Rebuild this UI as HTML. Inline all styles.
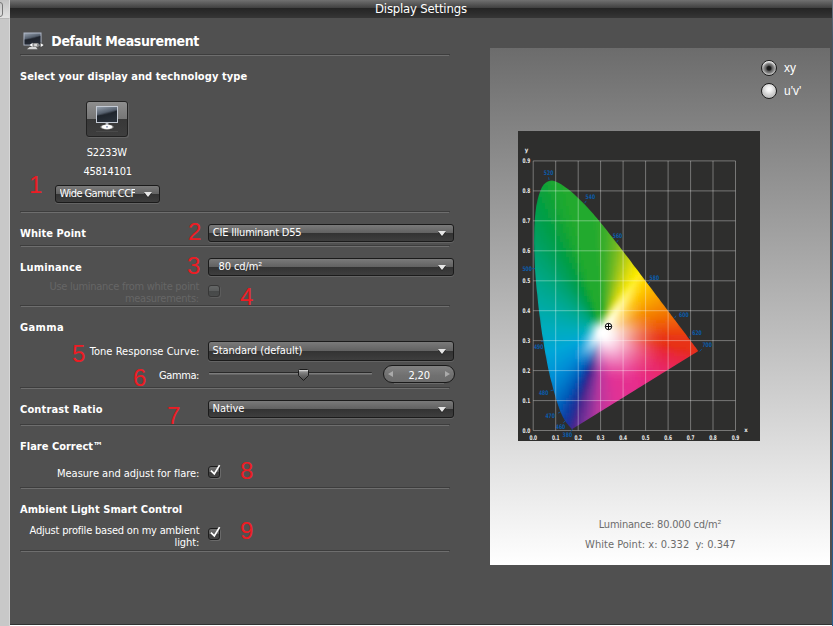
<!DOCTYPE html>
<html><head><meta charset="utf-8"><title>Display Settings</title>
<style>
*{box-sizing:border-box;margin:0;padding:0}
html,body{width:833px;height:626px;overflow:hidden;background:#505050}
body{position:relative;font-family:"DejaVu Sans Condensed","DejaVu Sans","Liberation Sans",sans-serif;font-size:11px;color:#fff}
.a{position:absolute;white-space:nowrap}
.t{position:absolute;white-space:nowrap;line-height:16px}
.b{font-weight:bold}
.sep{position:absolute;left:20px;width:430px;height:1px;background:#3d3d3d}
.sep:after{content:"";position:absolute;left:1px;right:1px;top:1px;height:1px;background:#6e6e6e}
.dd{position:absolute;left:208px;width:246px;height:18px;border:1px solid #1b1b1b;border-radius:3px;background:linear-gradient(#7a7a7a 0,#626262 48%,#333 52%,#3e3e3e 100%);box-shadow:0 1px 0 #646464}
.dd i{position:absolute;right:7px;top:6px;width:0;height:0;border-left:4.5px solid transparent;border-right:4.5px solid transparent;border-top:5px solid #e6e6e6;filter:drop-shadow(0 1px 0 #222)}
.num{position:absolute;color:#ed1c24;font-family:"Liberation Sans",sans-serif;font-size:24px;line-height:24px;white-space:nowrap}
.cb{position:absolute;left:208px;width:12px;height:12px;border:1px solid #1e1e1e;border-radius:3px;background:linear-gradient(#727272,#5c5c5c 50%,#3c3c3c 51%,#444);box-shadow:1px 1px 0 #6a6a6a}
.g{color:#666}
</style></head>
<body>
<div class="a" style="left:10px;top:0;width:823px;height:18px;background:linear-gradient(#717171 0,#6a6a6a 1px,#3f3f3f 8px,#252525 8.5px,#2c2c2c 13px,#363636 18px)"></div>
<div class="a" style="left:0;top:0;width:10px;height:626px;background:#c8c8c8;border-right:1px solid #d6d6d6"></div>
<div class="a" style="left:0;top:0;width:10px;height:19px;background:linear-gradient(#c2c2c2,#e2e2e2);border-bottom:1px solid #b8b8b8;border-right:1px solid #dcdcdc"></div>
<div class="a" style="left:-8px;top:2px;width:11px;height:15px;border:1px solid #777;border-radius:3px"></div>
<div class="a" style="left:832px;top:0;width:1px;height:626px;background:linear-gradient(#6a7480 0,#46566a 40px,#2e5680 60%,#2b5d8c)"></div>
<div class="a" style="left:10px;top:625px;width:822px;height:1px;background:#fff"></div>
<div class="a" style="left:10px;top:624px;width:822px;height:1px;background:#333"></div>
<div class="t " id="t1" style="left:375.00px;top:0px;letter-spacing:-0.188px;font-size:13px;line-height:17px">Display Settings</div>
<div class="t b" id="t2" style="left:51.30px;top:31px;letter-spacing:-0.339px;font-size:14px;line-height:20px">Default Measurement</div>
<svg class="a" style="left:21px;top:30px" width="26" height="22" viewBox="0 0 26 22"><defs><linearGradient id="mss" x1="0" y1="0" x2="0.35" y2="1"><stop offset="0" stop-color="#9aa5b2"/><stop offset=".45" stop-color="#56606e"/><stop offset=".56" stop-color="#2a303a"/><stop offset="1" stop-color="#3a424e"/></linearGradient><radialGradient id="msb" cx=".5" cy=".5" r=".5"><stop offset="0" stop-color="#fff"/><stop offset=".6" stop-color="#f4f4f4"/><stop offset="1" stop-color="#fff" stop-opacity="0"/></radialGradient></defs><rect x="3" y="3" width="17" height="12" fill="url(#mss)" stroke="#aeb6c6"/><path d="M3.5 9.5Q12 9.5 19.5 6V14.5H3.500z" fill="#0c0f16" opacity=".4"/><path d="M6 19.200L8.600 17H15L16.600 19.200z" fill="#e4e4e4" opacity=".9"/><path d="M8.700 15L11.600 12.800V17.200z" fill="#fff"/><rect x="11.800" y="13" width="6" height="4" rx="1.200" fill="#8e8e8e"/><rect x="13.200" y="13.900" width="2.800" height="2.200" fill="#d8d8d8"/><path d="M19.300 12.500L23.300 15.100L19.300 17.700z" fill="#fff" stroke="#262626" stroke-width=".6"/></svg>
<div class="sep" style="top:54px"></div>
<div class="t b" id="t3" style="left:20.00px;top:69px;letter-spacing:0.075px;">Select your display and technology type</div>
<div class="a" style="left:86px;top:101px;width:42px;height:36px;border:1px solid #222;border-radius:3px;background:linear-gradient(#8e8e8e 0,#767676 49%,#383838 51%,#3e3e3e 100%);box-shadow:1px 1px 0 #626262"></div>
<svg class="a" style="left:94px;top:104px" width="26" height="30" viewBox="0 0 26 30"><defs><linearGradient id="mbs" x1="0" y1="0" x2="0.35" y2="1"><stop offset="0" stop-color="#9aa5b2"/><stop offset=".45" stop-color="#56606e"/><stop offset=".56" stop-color="#2a303a"/><stop offset="1" stop-color="#3a424e"/></linearGradient><radialGradient id="mbb" cx=".5" cy=".5" r=".5"><stop offset="0" stop-color="#fff"/><stop offset=".6" stop-color="#f4f4f4"/><stop offset="1" stop-color="#fff" stop-opacity="0"/></radialGradient></defs><rect x="2.5" y="2.5" width="21" height="16" fill="url(#mbs)" stroke="#c4cad4"/><path d="M3 11.5Q13 11.5 23 6.5V18H3z" fill="#10131a" opacity=".4"/><rect x="11.6" y="19" width="2.8" height="3.4" fill="#b8bcc4"/><ellipse cx="13" cy="23" rx="7.2" ry="2.9" fill="url(#mbb)"/><ellipse cx="13" cy="22.8" rx="5" ry="1.7" fill="#fff"/><rect x="12.2" y="22" width="1.6" height="1.6" fill="#8a94b4"/><rect x="2" y="27" width="22" height="1" fill="#5a5a5a" opacity=".45"/></svg>
<div class="t " id="t4" style="left:86.70px;top:145px;letter-spacing:-0.158px;">S2233W</div>
<div class="t " id="t5" style="left:83.40px;top:164px;letter-spacing:-0.245px;">45814101</div>
<div class="num" style="left:29px;top:173px">1</div>
<div class="dd" style="left:55px;top:185px;width:105px"><i></i></div>
<div class="a" style="left:59.5px;top:186px;width:75.6px;height:16px;overflow:hidden"><div class="t" id="wg" style="left:0;top:0;letter-spacing:-0.56px">Wide Gamut CCFL</div></div>
<div class="sep" style="top:211px"></div>
<div class="t b" id="t6" style="left:20.00px;top:226px;letter-spacing:0.048px;">White Point</div>
<div class="num" style="left:188px;top:220px">2</div>
<div class="dd" style="top:224px"><i></i></div>
<div class="t " id="t7" style="left:212.80px;top:225px;letter-spacing:-0.198px;">CIE Illuminant D55</div>
<div class="sep" style="top:245px"></div>
<div class="t b" id="t8" style="left:20.00px;top:260px;letter-spacing:0.177px;">Luminance</div>
<div class="num" style="left:187px;top:254px">3</div>
<div class="dd" style="top:258px"><i></i></div>
<div class="t " id="t9" style="left:218.60px;top:259px;letter-spacing:-0.113px;">80 cd/m²</div>
<div class="t g" id="t10" style="right:633.77px;top:279px;letter-spacing:-0.272px;">Use luminance from white point</div>
<div class="t g" id="t11" style="right:634.07px;top:291px;letter-spacing:-0.270px;">measurements:</div>
<div class="a" style="left:208px;top:285px;width:12px;height:12px;background:linear-gradient(#646666,#5a5c5c 50%,#474949 51%,#4a4c4c);border:1px solid #383838;border-radius:3px;box-shadow:1px 1px 0 #5c5c5c"></div>
<div class="num" style="left:240px;top:285px">4</div>
<div class="sep" style="top:305px"></div>
<div class="t b" id="t12" style="left:20.00px;top:320px;letter-spacing:0.378px;">Gamma</div>
<div class="num" style="left:72px;top:342px">5</div>
<div class="t " id="t13" style="right:633.56px;top:344px;letter-spacing:0.040px;">Tone Response Curve:</div>
<div class="dd" style="top:341px;height:20px"><i style="top:7px"></i></div>
<div class="t " id="t14" style="left:212.40px;top:343px;letter-spacing:-0.039px;">Standard (default)</div>
<div class="num" style="left:133px;top:366px">6</div>
<div class="t " id="t15" style="right:634.02px;top:368px;letter-spacing:-0.420px;">Gamma:</div>
<div class="a" style="left:209px;top:372px;width:163px;height:3px;border-radius:1px;background:linear-gradient(#2a2a2a 0,#2a2a2a 1px,#7c7c7c 1px,#7c7c7c 2px,#666 2px)"></div>
<svg class="a" style="left:298px;top:369px" width="11" height="13" viewBox="0 0 11 13"><defs><linearGradient id="tg" x1="0" y1="0" x2="0" y2="1"><stop offset="0.08" stop-color="#d4d4d4"/><stop offset=".22" stop-color="#8a8a8a"/><stop offset=".55" stop-color="#666"/><stop offset="1" stop-color="#484848"/></linearGradient></defs><path d="M1.5 .5h8a1 1 0 0 1 1 1v5l-5 5-5-5v-5a1 1 0 0 1 1-1z" fill="url(#tg)" stroke="#1c1c1c"/></svg>
<div class="a" style="left:383px;top:365px;width:72px;height:18px;border:1.5px solid #1a1a1a;border-radius:9px;background:linear-gradient(#828282,#707070 60%,#6c6c6c)"></div><div class="a" style="left:394px;top:383px;width:50px;height:1px;background:#6a6a6a"></div>
<div class="t " id="t16" style="left:408.40px;top:368px;letter-spacing:-0.108px;">2,20</div>
<div class="a" style="left:388px;top:371px;width:0;height:0;border-top:3.5px solid transparent;border-bottom:3.5px solid transparent;border-right:5px solid #aaa"></div>
<div class="a" style="left:445px;top:371px;width:0;height:0;border-top:3.5px solid transparent;border-bottom:3.5px solid transparent;border-left:5px solid #aaa"></div>
<div class="sep" style="top:387px"></div>
<div class="t b" id="t17" style="left:20.00px;top:402px;letter-spacing:0.144px;">Contrast Ratio</div>
<div class="num" style="left:167px;top:404px">7</div>
<div class="dd" style="top:400px"><i></i></div>
<div class="t " id="t18" style="left:212.60px;top:401px;letter-spacing:-0.058px;">Native</div>
<div class="sep" style="top:424px"></div>
<div class="t b" id="t19" style="left:20.00px;top:439px;letter-spacing:0.007px;">Flare Correct™</div>
<div class="t " id="t20" style="right:633.61px;top:466px;letter-spacing:-0.014px;">Measure and adjust for flare:</div>
<div class="cb" style="top:466px"><svg style="position:absolute;left:-1px;top:-1px;overflow:visible" width="12" height="12" viewBox="0 0 12 12"><path d="M2.900 4.700L6.300 7.900L11.600 -0.900" fill="none" stroke="#fff" stroke-width="1.700"/></svg></div>
<div class="num" style="left:240px;top:459px">8</div>
<div class="sep" style="top:487px"></div>
<div class="t b" id="t21" style="left:20.00px;top:502px;letter-spacing:0.064px;">Ambient Light Smart Control</div>
<div class="t " id="t22" style="right:633.70px;top:523px;letter-spacing:-0.199px;">Adjust profile based on my ambient</div>
<div class="t " id="t23" style="right:633.66px;top:535px;letter-spacing:-0.064px;">light:</div>
<div class="cb" style="top:528px"><svg style="position:absolute;left:-1px;top:-1px;overflow:visible" width="12" height="12" viewBox="0 0 12 12"><path d="M2.900 4.700L6.300 7.900L11.600 -0.900" fill="none" stroke="#fff" stroke-width="1.700"/></svg></div>
<div class="num" style="left:240px;top:519px">9</div>
<div class="sep" style="top:550px"></div>
<div class="a" style="left:490px;top:48px;width:340px;height:517px;background:linear-gradient(#6c6c6c,#fff)"></div>
<div class="a" style="left:761px;top:60px;width:16px;height:16px;border-radius:50%;border:1px solid #1c1c1c;background:radial-gradient(circle 7px at 50% 52%,#151515 0,#1c1c1c 1.8px,#606060 3.2px,#7c7c7c 4.5px,rgba(150,150,150,.5) 5.8px,rgba(160,160,160,0) 7px),linear-gradient(#fff,#d8d8d8 30%,#a0a0a0 55%,#dcdcdc)"></div>
<div class="t" style="left:784px;top:60px;font-family:'Liberation Sans',sans-serif;font-size:12px">xy</div>
<div class="a" style="left:761px;top:83px;width:16px;height:16px;border-radius:50%;border:1px solid #1c1c1c;background:radial-gradient(circle 10px at 50% 36%,#fff 0,#f2f2f2 2.5px,#cfcfcf 6px,#b4b4b4 10px)"></div>
<div class="t" style="left:784px;top:83px;font-family:'Liberation Sans',sans-serif;font-size:12px">u'v'</div>
<svg class="a" style="left:518px;top:131px" width="242" height="310" viewBox="0 0 242 310">
<style>.c rect{width:3.2px;height:3.2px}.ax{font:bold 6.5px "DejaVu Sans Condensed","DejaVu Sans",sans-serif;fill:#ececec}.wl{font:bold 6.3px "DejaVu Sans Condensed","DejaVu Sans",sans-serif;fill:#0b5ba8}</style>
<defs><clipPath id="lc"><path d="M54.3 298.0L54.3 298.0L54.3 298.0L54.2 298.1L54.2 298.1L54.1 298.1L54.0 298.1L53.9 298.0L53.7 298.0L53.6 297.9L53.5 297.8L53.3 297.6L53.2 297.4L53.0 297.2L52.7 296.9L52.5 296.6L52.2 296.2L51.8 295.8L51.3 295.2L50.8 294.7L50.4 294.2L50.1 293.8L49.8 293.5L49.5 293.1L49.1 292.7L48.8 292.2L48.4 291.8L48.0 291.2L47.6 290.6L47.1 290.0L46.7 289.3L46.2 288.5L45.7 287.5L45.1 286.4L44.5 285.2L43.8 283.8L43.1 282.2L42.4 280.4L41.6 278.4L40.7 276.1L39.8 273.5L38.9 270.6L37.9 267.4L36.8 263.8L35.7 259.8L34.5 255.3L33.3 250.5L31.9 245.2L30.6 239.4L29.3 233.0L28.0 226.2L26.7 218.9L25.4 211.1L24.1 202.9L22.8 194.1L21.6 185.0L20.5 175.9L19.5 166.6L18.5 157.0L17.7 147.5L17.0 138.2L16.6 129.2L16.2 120.3L16.0 111.6L16.1 103.4L16.3 95.6L16.8 88.1L17.5 81.1L18.3 74.8L19.4 69.2L20.8 64.2L22.3 59.9L23.9 56.3L25.7 53.6L27.7 51.7L29.8 50.5L31.9 49.8L34.1 49.6L36.3 50.1L38.6 51.0L40.9 52.1L43.2 53.3L45.4 54.8L47.7 56.4L50.0 58.1L52.2 59.8L54.3 61.6L56.5 63.5L58.6 65.4L60.7 67.4L62.7 69.4L64.8 71.5L66.8 73.6L68.9 75.8L70.9 78.0L72.9 80.3L75.0 82.6L77.0 84.9L79.0 87.3L81.0 89.7L83.0 92.2L85.0 94.6L87.0 97.1L89.0 99.6L91.0 102.2L93.0 104.7L95.1 107.3L97.1 109.9L99.1 112.5L101.1 115.1L103.1 117.7L105.1 120.3L107.1 122.9L109.1 125.5L111.1 128.1L113.1 130.8L115.0 133.4L117.0 136.0L119.0 138.6L120.9 141.1L122.8 143.7L124.8 146.2L126.7 148.8L128.5 151.3L130.4 153.8L132.3 156.2L134.1 158.6L135.9 161.0L137.7 163.4L139.4 165.7L141.2 168.0L142.8 170.3L144.5 172.5L146.1 174.6L147.7 176.7L149.2 178.8L150.7 180.7L152.2 182.6L153.5 184.5L154.9 186.2L156.1 187.9L157.4 189.6L158.6 191.2L159.8 192.8L160.9 194.3L161.9 195.6L162.8 196.8L163.8 198.0L164.9 199.5L166.2 201.3L167.8 203.3L169.3 205.4L170.6 207.2L171.7 208.6L172.7 209.9L173.5 211.0L174.3 212.0L175.1 213.0L175.7 213.9L176.3 214.7L176.8 215.4L177.3 216.0L177.7 216.5L178.1 217.0L178.4 217.4L178.7 217.8L178.9 218.1L179.1 218.4L179.3 218.6L179.5 218.9L179.7 219.2L179.9 219.4L180.1 219.7L180.2 219.8L180.3 219.9L180.3 220.0L180.4 220.0Z"/></clipPath><filter id="bl" x="-5%" y="-5%" width="110%" height="110%"><feGaussianBlur stdDeviation="1.6"/></filter></defs>
<rect width="242" height="310" fill="#2e2e2d"/>
<g clip-path="url(#lc)"><g class="c" filter="url(#bl)">
<rect x="27" y="48" fill="#13a435"/>
<rect x="30" y="48" fill="#17a633"/>
<rect x="33" y="48" fill="#1ba831"/>
<rect x="36" y="48" fill="#1da830"/>
<rect x="39" y="48" fill="#1ea92f"/>
<rect x="24" y="51" fill="#0fa238"/>
<rect x="27" y="51" fill="#12a436"/>
<rect x="30" y="51" fill="#16a534"/>
<rect x="33" y="51" fill="#1aa731"/>
<rect x="36" y="51" fill="#1da830"/>
<rect x="39" y="51" fill="#1ea92f"/>
<rect x="42" y="51" fill="#1fa92f"/>
<rect x="21" y="54" fill="#0ba13c"/>
<rect x="24" y="54" fill="#0ea238"/>
<rect x="27" y="54" fill="#11a336"/>
<rect x="30" y="54" fill="#14a534"/>
<rect x="33" y="54" fill="#18a632"/>
<rect x="36" y="54" fill="#1ca830"/>
<rect x="39" y="54" fill="#1ea92f"/>
<rect x="42" y="54" fill="#1fa92f"/>
<rect x="45" y="54" fill="#21aa2e"/>
<rect x="48" y="54" fill="#22aa2e"/>
<rect x="21" y="57" fill="#09a13d"/>
<rect x="24" y="57" fill="#0ca23a"/>
<rect x="27" y="57" fill="#0fa337"/>
<rect x="30" y="57" fill="#13a435"/>
<rect x="33" y="57" fill="#17a633"/>
<rect x="36" y="57" fill="#1ba831"/>
<rect x="39" y="57" fill="#1da830"/>
<rect x="42" y="57" fill="#1fa92f"/>
<rect x="45" y="57" fill="#20a92f"/>
<rect x="48" y="57" fill="#22aa2e"/>
<rect x="51" y="57" fill="#22aa2e"/>
<rect x="18" y="60" fill="#06a041"/>
<rect x="21" y="60" fill="#08a03f"/>
<rect x="24" y="60" fill="#0ba13b"/>
<rect x="27" y="60" fill="#0ea238"/>
<rect x="30" y="60" fill="#12a436"/>
<rect x="33" y="60" fill="#15a534"/>
<rect x="36" y="60" fill="#19a731"/>
<rect x="39" y="60" fill="#1da830"/>
<rect x="42" y="60" fill="#1ea92f"/>
<rect x="45" y="60" fill="#20a92f"/>
<rect x="48" y="60" fill="#21aa2e"/>
<rect x="51" y="60" fill="#22aa2e"/>
<rect x="54" y="60" fill="#22aa2e"/>
<rect x="18" y="63" fill="#059f43"/>
<rect x="21" y="63" fill="#07a040"/>
<rect x="24" y="63" fill="#0aa13d"/>
<rect x="27" y="63" fill="#0da239"/>
<rect x="30" y="63" fill="#10a337"/>
<rect x="33" y="63" fill="#14a535"/>
<rect x="36" y="63" fill="#18a632"/>
<rect x="39" y="63" fill="#1ca830"/>
<rect x="42" y="63" fill="#1ea92f"/>
<rect x="45" y="63" fill="#1fa92f"/>
<rect x="48" y="63" fill="#21aa2e"/>
<rect x="51" y="63" fill="#22aa2e"/>
<rect x="54" y="63" fill="#22aa2e"/>
<rect x="57" y="63" fill="#23aa2e"/>
<rect x="18" y="66" fill="#049f44"/>
<rect x="21" y="66" fill="#06a041"/>
<rect x="24" y="66" fill="#09a03e"/>
<rect x="27" y="66" fill="#0ca13b"/>
<rect x="30" y="66" fill="#0fa238"/>
<rect x="33" y="66" fill="#12a435"/>
<rect x="36" y="66" fill="#17a633"/>
<rect x="39" y="66" fill="#1ba831"/>
<rect x="42" y="66" fill="#1da830"/>
<rect x="45" y="66" fill="#1fa92f"/>
<rect x="48" y="66" fill="#20a92f"/>
<rect x="51" y="66" fill="#22aa2e"/>
<rect x="54" y="66" fill="#22aa2e"/>
<rect x="57" y="66" fill="#23aa2e"/>
<rect x="60" y="66" fill="#23aa2e"/>
<rect x="18" y="69" fill="#029f45"/>
<rect x="21" y="69" fill="#059f42"/>
<rect x="24" y="69" fill="#07a040"/>
<rect x="27" y="69" fill="#0aa13c"/>
<rect x="30" y="69" fill="#0da239"/>
<rect x="33" y="69" fill="#11a336"/>
<rect x="36" y="69" fill="#15a534"/>
<rect x="39" y="69" fill="#19a731"/>
<rect x="42" y="69" fill="#1da830"/>
<rect x="45" y="69" fill="#1ea92f"/>
<rect x="48" y="69" fill="#20a92f"/>
<rect x="51" y="69" fill="#22aa2e"/>
<rect x="54" y="69" fill="#22aa2e"/>
<rect x="57" y="69" fill="#23aa2e"/>
<rect x="60" y="69" fill="#23aa2e"/>
<rect x="63" y="69" fill="#23aa2e"/>
<rect x="15" y="72" fill="#009e4a"/>
<rect x="18" y="72" fill="#019e46"/>
<rect x="21" y="72" fill="#049f44"/>
<rect x="24" y="72" fill="#06a041"/>
<rect x="27" y="72" fill="#09a13e"/>
<rect x="30" y="72" fill="#0ca13a"/>
<rect x="33" y="72" fill="#10a337"/>
<rect x="36" y="72" fill="#14a435"/>
<rect x="39" y="72" fill="#18a632"/>
<rect x="42" y="72" fill="#1ca830"/>
<rect x="45" y="72" fill="#1ea92f"/>
<rect x="48" y="72" fill="#20a92f"/>
<rect x="51" y="72" fill="#21aa2e"/>
<rect x="54" y="72" fill="#22aa2e"/>
<rect x="57" y="72" fill="#22aa2e"/>
<rect x="60" y="72" fill="#23aa2e"/>
<rect x="63" y="72" fill="#23aa2e"/>
<rect x="66" y="72" fill="#23aa2e"/>
<rect x="15" y="75" fill="#009e4c"/>
<rect x="18" y="75" fill="#009e48"/>
<rect x="21" y="75" fill="#029f45"/>
<rect x="24" y="75" fill="#059f42"/>
<rect x="27" y="75" fill="#08a03f"/>
<rect x="30" y="75" fill="#0ba13c"/>
<rect x="33" y="75" fill="#0ea238"/>
<rect x="36" y="75" fill="#12a436"/>
<rect x="39" y="75" fill="#16a633"/>
<rect x="42" y="75" fill="#1ba831"/>
<rect x="45" y="75" fill="#1da830"/>
<rect x="48" y="75" fill="#1fa92f"/>
<rect x="51" y="75" fill="#21aa2e"/>
<rect x="54" y="75" fill="#22aa2e"/>
<rect x="57" y="75" fill="#22aa2e"/>
<rect x="60" y="75" fill="#23aa2e"/>
<rect x="63" y="75" fill="#23aa2e"/>
<rect x="66" y="75" fill="#23aa2e"/>
<rect x="69" y="75" fill="#24aa2e"/>
<rect x="15" y="78" fill="#009f4e"/>
<rect x="18" y="78" fill="#009e4a"/>
<rect x="21" y="78" fill="#019e47"/>
<rect x="24" y="78" fill="#049f44"/>
<rect x="27" y="78" fill="#06a041"/>
<rect x="30" y="78" fill="#09a13d"/>
<rect x="33" y="78" fill="#0da23a"/>
<rect x="36" y="78" fill="#10a337"/>
<rect x="39" y="78" fill="#15a534"/>
<rect x="42" y="78" fill="#19a732"/>
<rect x="45" y="78" fill="#1da830"/>
<rect x="48" y="78" fill="#1fa92f"/>
<rect x="51" y="78" fill="#20a92f"/>
<rect x="54" y="78" fill="#22aa2e"/>
<rect x="57" y="78" fill="#22aa2e"/>
<rect x="60" y="78" fill="#23aa2e"/>
<rect x="63" y="78" fill="#23aa2e"/>
<rect x="66" y="78" fill="#23aa2e"/>
<rect x="69" y="78" fill="#24aa2e"/>
<rect x="72" y="78" fill="#24aa2e"/>
<rect x="15" y="81" fill="#009f50"/>
<rect x="18" y="81" fill="#009e4c"/>
<rect x="21" y="81" fill="#009e48"/>
<rect x="24" y="81" fill="#029f45"/>
<rect x="27" y="81" fill="#059f42"/>
<rect x="30" y="81" fill="#08a03f"/>
<rect x="33" y="81" fill="#0ba13b"/>
<rect x="36" y="81" fill="#0fa238"/>
<rect x="39" y="81" fill="#13a435"/>
<rect x="42" y="81" fill="#18a632"/>
<rect x="45" y="81" fill="#1ca830"/>
<rect x="48" y="81" fill="#1ea92f"/>
<rect x="51" y="81" fill="#20a92f"/>
<rect x="54" y="81" fill="#22aa2e"/>
<rect x="57" y="81" fill="#22aa2e"/>
<rect x="60" y="81" fill="#23aa2e"/>
<rect x="63" y="81" fill="#23aa2e"/>
<rect x="66" y="81" fill="#23aa2e"/>
<rect x="69" y="81" fill="#24aa2e"/>
<rect x="72" y="81" fill="#24aa2e"/>
<rect x="75" y="81" fill="#27ab2d"/>
<rect x="15" y="84" fill="#009f52"/>
<rect x="18" y="84" fill="#009f4e"/>
<rect x="21" y="84" fill="#009e4a"/>
<rect x="24" y="84" fill="#019e47"/>
<rect x="27" y="84" fill="#049f44"/>
<rect x="30" y="84" fill="#07a040"/>
<rect x="33" y="84" fill="#0aa13d"/>
<rect x="36" y="84" fill="#0da239"/>
<rect x="39" y="84" fill="#11a336"/>
<rect x="42" y="84" fill="#16a533"/>
<rect x="45" y="84" fill="#1ba831"/>
<rect x="48" y="84" fill="#1da830"/>
<rect x="51" y="84" fill="#1fa92f"/>
<rect x="54" y="84" fill="#21aa2e"/>
<rect x="57" y="84" fill="#22aa2e"/>
<rect x="60" y="84" fill="#23aa2e"/>
<rect x="63" y="84" fill="#23aa2e"/>
<rect x="66" y="84" fill="#23aa2e"/>
<rect x="69" y="84" fill="#24aa2e"/>
<rect x="72" y="84" fill="#24aa2e"/>
<rect x="75" y="84" fill="#27aa2e"/>
<rect x="78" y="84" fill="#2dab2d"/>
<rect x="15" y="87" fill="#009f54"/>
<rect x="18" y="87" fill="#009f50"/>
<rect x="21" y="87" fill="#009e4c"/>
<rect x="24" y="87" fill="#009e48"/>
<rect x="27" y="87" fill="#029f45"/>
<rect x="30" y="87" fill="#059f42"/>
<rect x="33" y="87" fill="#08a03f"/>
<rect x="36" y="87" fill="#0ca13b"/>
<rect x="39" y="87" fill="#10a337"/>
<rect x="42" y="87" fill="#14a534"/>
<rect x="45" y="87" fill="#19a732"/>
<rect x="48" y="87" fill="#1da830"/>
<rect x="51" y="87" fill="#1fa92f"/>
<rect x="54" y="87" fill="#21aa2e"/>
<rect x="57" y="87" fill="#22aa2e"/>
<rect x="60" y="87" fill="#22aa2e"/>
<rect x="63" y="87" fill="#23aa2e"/>
<rect x="66" y="87" fill="#23aa2e"/>
<rect x="69" y="87" fill="#24aa2e"/>
<rect x="72" y="87" fill="#24aa2e"/>
<rect x="75" y="87" fill="#26aa2e"/>
<rect x="78" y="87" fill="#2cab2d"/>
<rect x="81" y="87" fill="#32ac2c"/>
<rect x="15" y="90" fill="#009f56"/>
<rect x="18" y="90" fill="#009f53"/>
<rect x="21" y="90" fill="#009f4f"/>
<rect x="24" y="90" fill="#009e4a"/>
<rect x="27" y="90" fill="#019e47"/>
<rect x="30" y="90" fill="#049f44"/>
<rect x="33" y="90" fill="#07a040"/>
<rect x="36" y="90" fill="#0aa13c"/>
<rect x="39" y="90" fill="#0ea238"/>
<rect x="42" y="90" fill="#12a435"/>
<rect x="45" y="90" fill="#17a633"/>
<rect x="48" y="90" fill="#1ca830"/>
<rect x="51" y="90" fill="#1ea92f"/>
<rect x="54" y="90" fill="#20a92f"/>
<rect x="57" y="90" fill="#22aa2e"/>
<rect x="60" y="90" fill="#22aa2e"/>
<rect x="63" y="90" fill="#23aa2e"/>
<rect x="66" y="90" fill="#23aa2e"/>
<rect x="69" y="90" fill="#23aa2e"/>
<rect x="72" y="90" fill="#24aa2e"/>
<rect x="75" y="90" fill="#26aa2e"/>
<rect x="78" y="90" fill="#2cab2d"/>
<rect x="81" y="90" fill="#32ac2c"/>
<rect x="84" y="90" fill="#38ad2b"/>
<rect x="15" y="93" fill="#009f58"/>
<rect x="18" y="93" fill="#009f55"/>
<rect x="21" y="93" fill="#009f51"/>
<rect x="24" y="93" fill="#009e4d"/>
<rect x="27" y="93" fill="#009e48"/>
<rect x="30" y="93" fill="#039f45"/>
<rect x="33" y="93" fill="#05a042"/>
<rect x="36" y="93" fill="#09a03e"/>
<rect x="39" y="93" fill="#0ca23a"/>
<rect x="42" y="93" fill="#11a336"/>
<rect x="45" y="93" fill="#16a534"/>
<rect x="48" y="93" fill="#1ba831"/>
<rect x="51" y="93" fill="#1ea92f"/>
<rect x="54" y="93" fill="#20a92f"/>
<rect x="57" y="93" fill="#22aa2e"/>
<rect x="60" y="93" fill="#22aa2e"/>
<rect x="63" y="93" fill="#23aa2e"/>
<rect x="66" y="93" fill="#23aa2e"/>
<rect x="69" y="93" fill="#23aa2e"/>
<rect x="72" y="93" fill="#24aa2e"/>
<rect x="75" y="93" fill="#25aa2e"/>
<rect x="78" y="93" fill="#2cab2d"/>
<rect x="81" y="93" fill="#32ac2c"/>
<rect x="84" y="93" fill="#38ad2b"/>
<rect x="15" y="96" fill="#00a05a"/>
<rect x="18" y="96" fill="#009f57"/>
<rect x="21" y="96" fill="#009f53"/>
<rect x="24" y="96" fill="#009f4f"/>
<rect x="27" y="96" fill="#009e4b"/>
<rect x="30" y="96" fill="#019e47"/>
<rect x="33" y="96" fill="#049f43"/>
<rect x="36" y="96" fill="#07a040"/>
<rect x="39" y="96" fill="#0ba13c"/>
<rect x="42" y="96" fill="#0fa237"/>
<rect x="45" y="96" fill="#14a435"/>
<rect x="48" y="96" fill="#19a732"/>
<rect x="51" y="96" fill="#1da830"/>
<rect x="54" y="96" fill="#1fa92f"/>
<rect x="57" y="96" fill="#21aa2e"/>
<rect x="60" y="96" fill="#22aa2e"/>
<rect x="63" y="96" fill="#23aa2e"/>
<rect x="66" y="96" fill="#23aa2e"/>
<rect x="69" y="96" fill="#23aa2e"/>
<rect x="72" y="96" fill="#24aa2e"/>
<rect x="75" y="96" fill="#25aa2e"/>
<rect x="78" y="96" fill="#2bab2d"/>
<rect x="81" y="96" fill="#32ac2c"/>
<rect x="84" y="96" fill="#38ad2b"/>
<rect x="87" y="96" fill="#3faf2a"/>
<rect x="15" y="99" fill="#00a05d"/>
<rect x="18" y="99" fill="#00a059"/>
<rect x="21" y="99" fill="#009f56"/>
<rect x="24" y="99" fill="#009f52"/>
<rect x="27" y="99" fill="#009e4d"/>
<rect x="30" y="99" fill="#009e49"/>
<rect x="33" y="99" fill="#039f45"/>
<rect x="36" y="99" fill="#06a042"/>
<rect x="39" y="99" fill="#09a13e"/>
<rect x="42" y="99" fill="#0da239"/>
<rect x="45" y="99" fill="#12a436"/>
<rect x="48" y="99" fill="#17a633"/>
<rect x="51" y="99" fill="#1ca830"/>
<rect x="54" y="99" fill="#1fa92f"/>
<rect x="57" y="99" fill="#21aa2e"/>
<rect x="60" y="99" fill="#22aa2e"/>
<rect x="63" y="99" fill="#23aa2e"/>
<rect x="66" y="99" fill="#23aa2e"/>
<rect x="69" y="99" fill="#23aa2e"/>
<rect x="72" y="99" fill="#24aa2e"/>
<rect x="75" y="99" fill="#24aa2e"/>
<rect x="78" y="99" fill="#2bab2d"/>
<rect x="81" y="99" fill="#32ac2c"/>
<rect x="84" y="99" fill="#38ad2b"/>
<rect x="87" y="99" fill="#40af29"/>
<rect x="90" y="99" fill="#4db227"/>
<rect x="15" y="102" fill="#00a05f"/>
<rect x="18" y="102" fill="#00a05b"/>
<rect x="21" y="102" fill="#009f58"/>
<rect x="24" y="102" fill="#009f54"/>
<rect x="27" y="102" fill="#009f50"/>
<rect x="30" y="102" fill="#009e4b"/>
<rect x="33" y="102" fill="#019e47"/>
<rect x="36" y="102" fill="#049f43"/>
<rect x="39" y="102" fill="#07a03f"/>
<rect x="42" y="102" fill="#0ba13b"/>
<rect x="45" y="102" fill="#10a337"/>
<rect x="48" y="102" fill="#15a534"/>
<rect x="51" y="102" fill="#1ba830"/>
<rect x="54" y="102" fill="#1ea92f"/>
<rect x="57" y="102" fill="#20a92f"/>
<rect x="60" y="102" fill="#22aa2e"/>
<rect x="63" y="102" fill="#22aa2e"/>
<rect x="66" y="102" fill="#23aa2e"/>
<rect x="69" y="102" fill="#23aa2e"/>
<rect x="72" y="102" fill="#24aa2e"/>
<rect x="75" y="102" fill="#24aa2e"/>
<rect x="78" y="102" fill="#2bab2d"/>
<rect x="81" y="102" fill="#32ac2c"/>
<rect x="84" y="102" fill="#38ad2b"/>
<rect x="87" y="102" fill="#40af29"/>
<rect x="90" y="102" fill="#4eb227"/>
<rect x="93" y="102" fill="#5bb525"/>
<rect x="15" y="105" fill="#00a062"/>
<rect x="18" y="105" fill="#00a05e"/>
<rect x="21" y="105" fill="#00a05a"/>
<rect x="24" y="105" fill="#009f57"/>
<rect x="27" y="105" fill="#009f53"/>
<rect x="30" y="105" fill="#009f4e"/>
<rect x="33" y="105" fill="#009e49"/>
<rect x="36" y="105" fill="#039f45"/>
<rect x="39" y="105" fill="#06a041"/>
<rect x="42" y="105" fill="#0aa13d"/>
<rect x="45" y="105" fill="#0ea238"/>
<rect x="48" y="105" fill="#13a435"/>
<rect x="51" y="105" fill="#19a732"/>
<rect x="54" y="105" fill="#1da830"/>
<rect x="57" y="105" fill="#1fa92f"/>
<rect x="60" y="105" fill="#22aa2e"/>
<rect x="63" y="105" fill="#22aa2e"/>
<rect x="66" y="105" fill="#23aa2e"/>
<rect x="69" y="105" fill="#23aa2e"/>
<rect x="72" y="105" fill="#24aa2e"/>
<rect x="75" y="105" fill="#24aa2e"/>
<rect x="78" y="105" fill="#2aab2d"/>
<rect x="81" y="105" fill="#31ac2c"/>
<rect x="84" y="105" fill="#38ad2b"/>
<rect x="87" y="105" fill="#41af29"/>
<rect x="90" y="105" fill="#4fb227"/>
<rect x="93" y="105" fill="#5db525"/>
<rect x="15" y="108" fill="#00a165"/>
<rect x="18" y="108" fill="#00a060"/>
<rect x="21" y="108" fill="#00a05d"/>
<rect x="24" y="108" fill="#009f59"/>
<rect x="27" y="108" fill="#009f55"/>
<rect x="30" y="108" fill="#009f51"/>
<rect x="33" y="108" fill="#009e4c"/>
<rect x="36" y="108" fill="#019e47"/>
<rect x="39" y="108" fill="#049f43"/>
<rect x="42" y="108" fill="#08a03f"/>
<rect x="45" y="108" fill="#0ca13a"/>
<rect x="48" y="108" fill="#11a336"/>
<rect x="51" y="108" fill="#17a633"/>
<rect x="54" y="108" fill="#1ca830"/>
<rect x="57" y="108" fill="#1fa92f"/>
<rect x="60" y="108" fill="#21aa2e"/>
<rect x="63" y="108" fill="#22aa2e"/>
<rect x="66" y="108" fill="#23aa2e"/>
<rect x="69" y="108" fill="#23aa2e"/>
<rect x="72" y="108" fill="#24aa2e"/>
<rect x="75" y="108" fill="#24aa2e"/>
<rect x="78" y="108" fill="#2aab2d"/>
<rect x="81" y="108" fill="#31ac2c"/>
<rect x="84" y="108" fill="#38ad2b"/>
<rect x="87" y="108" fill="#41af29"/>
<rect x="90" y="108" fill="#50b227"/>
<rect x="93" y="108" fill="#5eb525"/>
<rect x="96" y="108" fill="#6bb823"/>
<rect x="15" y="111" fill="#00a268"/>
<rect x="18" y="111" fill="#00a163"/>
<rect x="21" y="111" fill="#00a05f"/>
<rect x="24" y="111" fill="#00a05b"/>
<rect x="27" y="111" fill="#009f58"/>
<rect x="30" y="111" fill="#009f53"/>
<rect x="33" y="111" fill="#009f4f"/>
<rect x="36" y="111" fill="#009e49"/>
<rect x="39" y="111" fill="#039f45"/>
<rect x="42" y="111" fill="#06a041"/>
<rect x="45" y="111" fill="#0aa13c"/>
<rect x="48" y="111" fill="#0fa237"/>
<rect x="51" y="111" fill="#15a534"/>
<rect x="54" y="111" fill="#1ba830"/>
<rect x="57" y="111" fill="#1ea92f"/>
<rect x="60" y="111" fill="#21aa2e"/>
<rect x="63" y="111" fill="#22aa2e"/>
<rect x="66" y="111" fill="#23aa2e"/>
<rect x="69" y="111" fill="#23aa2e"/>
<rect x="72" y="111" fill="#23aa2e"/>
<rect x="75" y="111" fill="#24aa2e"/>
<rect x="78" y="111" fill="#29ab2d"/>
<rect x="81" y="111" fill="#31ac2c"/>
<rect x="84" y="111" fill="#38ad2b"/>
<rect x="87" y="111" fill="#42af29"/>
<rect x="90" y="111" fill="#51b327"/>
<rect x="93" y="111" fill="#5fb625"/>
<rect x="96" y="111" fill="#6db923"/>
<rect x="99" y="111" fill="#7bbc21"/>
<rect x="15" y="114" fill="#00a26a"/>
<rect x="18" y="114" fill="#00a167"/>
<rect x="21" y="114" fill="#00a162"/>
<rect x="24" y="114" fill="#00a05e"/>
<rect x="27" y="114" fill="#00a05a"/>
<rect x="30" y="114" fill="#009f56"/>
<rect x="33" y="114" fill="#009f51"/>
<rect x="36" y="114" fill="#009e4c"/>
<rect x="39" y="114" fill="#019e47"/>
<rect x="42" y="114" fill="#049f43"/>
<rect x="45" y="114" fill="#08a03f"/>
<rect x="48" y="114" fill="#0da239"/>
<rect x="51" y="114" fill="#12a435"/>
<rect x="54" y="114" fill="#19a732"/>
<rect x="57" y="114" fill="#1da830"/>
<rect x="60" y="114" fill="#20a92f"/>
<rect x="63" y="114" fill="#22aa2e"/>
<rect x="66" y="114" fill="#23aa2e"/>
<rect x="69" y="114" fill="#23aa2e"/>
<rect x="72" y="114" fill="#23aa2e"/>
<rect x="75" y="114" fill="#24aa2e"/>
<rect x="78" y="114" fill="#29ab2d"/>
<rect x="81" y="114" fill="#31ac2c"/>
<rect x="84" y="114" fill="#38ad2b"/>
<rect x="87" y="114" fill="#43af29"/>
<rect x="90" y="114" fill="#52b327"/>
<rect x="93" y="114" fill="#61b625"/>
<rect x="96" y="114" fill="#6eb923"/>
<rect x="99" y="114" fill="#7ebd20"/>
<rect x="102" y="114" fill="#8fc21d"/>
<rect x="15" y="117" fill="#00a36d"/>
<rect x="18" y="117" fill="#00a26a"/>
<rect x="21" y="117" fill="#00a166"/>
<rect x="24" y="117" fill="#00a061"/>
<rect x="27" y="117" fill="#00a05d"/>
<rect x="30" y="117" fill="#009f59"/>
<rect x="33" y="117" fill="#009f54"/>
<rect x="36" y="117" fill="#009f4f"/>
<rect x="39" y="117" fill="#009e4a"/>
<rect x="42" y="117" fill="#039f45"/>
<rect x="45" y="117" fill="#06a041"/>
<rect x="48" y="117" fill="#0ba13c"/>
<rect x="51" y="117" fill="#10a337"/>
<rect x="54" y="117" fill="#16a633"/>
<rect x="57" y="117" fill="#1da830"/>
<rect x="60" y="117" fill="#1fa92f"/>
<rect x="63" y="117" fill="#22aa2e"/>
<rect x="66" y="117" fill="#22aa2e"/>
<rect x="69" y="117" fill="#23aa2e"/>
<rect x="72" y="117" fill="#23aa2e"/>
<rect x="75" y="117" fill="#24aa2e"/>
<rect x="78" y="117" fill="#28ab2d"/>
<rect x="81" y="117" fill="#31ac2c"/>
<rect x="84" y="117" fill="#38ad2b"/>
<rect x="87" y="117" fill="#43b029"/>
<rect x="90" y="117" fill="#54b327"/>
<rect x="93" y="117" fill="#63b624"/>
<rect x="96" y="117" fill="#70b922"/>
<rect x="99" y="117" fill="#82be1f"/>
<rect x="102" y="117" fill="#93c31c"/>
<rect x="105" y="117" fill="#a3c71a"/>
<rect x="15" y="120" fill="#00a370"/>
<rect x="18" y="120" fill="#00a36d"/>
<rect x="21" y="120" fill="#00a269"/>
<rect x="24" y="120" fill="#00a164"/>
<rect x="27" y="120" fill="#00a05f"/>
<rect x="30" y="120" fill="#00a05b"/>
<rect x="33" y="120" fill="#009f57"/>
<rect x="36" y="120" fill="#009f52"/>
<rect x="39" y="120" fill="#009e4d"/>
<rect x="42" y="120" fill="#019e47"/>
<rect x="45" y="120" fill="#049f43"/>
<rect x="48" y="120" fill="#09a03e"/>
<rect x="51" y="120" fill="#0ea238"/>
<rect x="54" y="120" fill="#14a535"/>
<rect x="57" y="120" fill="#1ba830"/>
<rect x="60" y="120" fill="#1ea92f"/>
<rect x="63" y="120" fill="#21aa2e"/>
<rect x="66" y="120" fill="#22aa2e"/>
<rect x="69" y="120" fill="#23aa2e"/>
<rect x="72" y="120" fill="#23aa2e"/>
<rect x="75" y="120" fill="#24aa2e"/>
<rect x="78" y="120" fill="#28ab2d"/>
<rect x="81" y="120" fill="#30ac2c"/>
<rect x="84" y="120" fill="#38ad2b"/>
<rect x="87" y="120" fill="#44b029"/>
<rect x="90" y="120" fill="#55b326"/>
<rect x="93" y="120" fill="#64b724"/>
<rect x="96" y="120" fill="#72ba22"/>
<rect x="99" y="120" fill="#85bf1f"/>
<rect x="102" y="120" fill="#97c41c"/>
<rect x="105" y="120" fill="#a7c919"/>
<rect x="15" y="123" fill="#00a473"/>
<rect x="18" y="123" fill="#00a370"/>
<rect x="21" y="123" fill="#00a26c"/>
<rect x="24" y="123" fill="#00a268"/>
<rect x="27" y="123" fill="#00a163"/>
<rect x="30" y="123" fill="#00a05e"/>
<rect x="33" y="123" fill="#00a05a"/>
<rect x="36" y="123" fill="#009f55"/>
<rect x="39" y="123" fill="#009f50"/>
<rect x="42" y="123" fill="#009e4a"/>
<rect x="45" y="123" fill="#039f45"/>
<rect x="48" y="123" fill="#07a040"/>
<rect x="51" y="123" fill="#0ca13b"/>
<rect x="54" y="123" fill="#12a436"/>
<rect x="57" y="123" fill="#19a732"/>
<rect x="60" y="123" fill="#1ea92f"/>
<rect x="63" y="123" fill="#20a92f"/>
<rect x="66" y="123" fill="#22aa2e"/>
<rect x="69" y="123" fill="#23aa2e"/>
<rect x="72" y="123" fill="#23aa2e"/>
<rect x="75" y="123" fill="#24aa2e"/>
<rect x="78" y="123" fill="#27ab2d"/>
<rect x="81" y="123" fill="#30ac2c"/>
<rect x="84" y="123" fill="#38ad2b"/>
<rect x="87" y="123" fill="#45b029"/>
<rect x="90" y="123" fill="#56b426"/>
<rect x="93" y="123" fill="#66b724"/>
<rect x="96" y="123" fill="#75bb22"/>
<rect x="99" y="123" fill="#89c01e"/>
<rect x="102" y="123" fill="#9bc51b"/>
<rect x="105" y="123" fill="#abca18"/>
<rect x="108" y="123" fill="#bacf14"/>
<rect x="15" y="126" fill="#00a476"/>
<rect x="18" y="126" fill="#00a473"/>
<rect x="21" y="126" fill="#00a36f"/>
<rect x="24" y="126" fill="#00a26b"/>
<rect x="27" y="126" fill="#00a167"/>
<rect x="30" y="126" fill="#00a062"/>
<rect x="33" y="126" fill="#00a05d"/>
<rect x="36" y="126" fill="#009f58"/>
<rect x="39" y="126" fill="#009f53"/>
<rect x="42" y="126" fill="#009e4e"/>
<rect x="45" y="126" fill="#019e47"/>
<rect x="48" y="126" fill="#059f43"/>
<rect x="51" y="126" fill="#09a13d"/>
<rect x="54" y="126" fill="#0fa237"/>
<rect x="57" y="126" fill="#16a533"/>
<rect x="60" y="126" fill="#1da830"/>
<rect x="63" y="126" fill="#20a92f"/>
<rect x="66" y="126" fill="#22aa2e"/>
<rect x="69" y="126" fill="#23aa2e"/>
<rect x="72" y="126" fill="#23aa2e"/>
<rect x="75" y="126" fill="#24aa2e"/>
<rect x="78" y="126" fill="#27aa2e"/>
<rect x="81" y="126" fill="#30ac2c"/>
<rect x="84" y="126" fill="#38ad2b"/>
<rect x="87" y="126" fill="#46b029"/>
<rect x="90" y="126" fill="#58b426"/>
<rect x="93" y="126" fill="#68b824"/>
<rect x="96" y="126" fill="#79bc21"/>
<rect x="99" y="126" fill="#8dc11d"/>
<rect x="102" y="126" fill="#9fc61a"/>
<rect x="105" y="126" fill="#b0cb17"/>
<rect x="108" y="126" fill="#bfd112"/>
<rect x="111" y="126" fill="#ced60e"/>
<rect x="15" y="129" fill="#00a579"/>
<rect x="18" y="129" fill="#00a476"/>
<rect x="21" y="129" fill="#00a472"/>
<rect x="24" y="129" fill="#00a36f"/>
<rect x="27" y="129" fill="#00a26a"/>
<rect x="30" y="129" fill="#00a166"/>
<rect x="33" y="129" fill="#00a060"/>
<rect x="36" y="129" fill="#00a05b"/>
<rect x="39" y="129" fill="#009f57"/>
<rect x="42" y="129" fill="#009f51"/>
<rect x="45" y="129" fill="#009e4b"/>
<rect x="48" y="129" fill="#039f45"/>
<rect x="51" y="129" fill="#07a040"/>
<rect x="54" y="129" fill="#0da23a"/>
<rect x="57" y="129" fill="#13a435"/>
<rect x="60" y="129" fill="#1ba830"/>
<rect x="63" y="129" fill="#1fa92f"/>
<rect x="66" y="129" fill="#22aa2e"/>
<rect x="69" y="129" fill="#23aa2e"/>
<rect x="72" y="129" fill="#23aa2e"/>
<rect x="75" y="129" fill="#24aa2e"/>
<rect x="78" y="129" fill="#26aa2e"/>
<rect x="81" y="129" fill="#30ac2c"/>
<rect x="84" y="129" fill="#38ad2b"/>
<rect x="87" y="129" fill="#47b028"/>
<rect x="90" y="129" fill="#59b426"/>
<rect x="93" y="129" fill="#6ab823"/>
<rect x="96" y="129" fill="#7cbd20"/>
<rect x="99" y="129" fill="#91c21d"/>
<rect x="102" y="129" fill="#a4c819"/>
<rect x="105" y="129" fill="#b5cd16"/>
<rect x="108" y="129" fill="#c4d311"/>
<rect x="111" y="129" fill="#d3d80d"/>
<rect x="114" y="129" fill="#e1dd09"/>
<rect x="15" y="132" fill="#00a57c"/>
<rect x="18" y="132" fill="#00a579"/>
<rect x="21" y="132" fill="#00a476"/>
<rect x="24" y="132" fill="#00a372"/>
<rect x="27" y="132" fill="#00a36e"/>
<rect x="30" y="132" fill="#00a269"/>
<rect x="33" y="132" fill="#00a164"/>
<rect x="36" y="132" fill="#00a05f"/>
<rect x="39" y="132" fill="#00a05a"/>
<rect x="42" y="132" fill="#009f55"/>
<rect x="45" y="132" fill="#009f4e"/>
<rect x="48" y="132" fill="#009e47"/>
<rect x="51" y="132" fill="#059f42"/>
<rect x="54" y="132" fill="#0aa13d"/>
<rect x="57" y="132" fill="#11a337"/>
<rect x="60" y="132" fill="#18a632"/>
<rect x="63" y="132" fill="#1ea92f"/>
<rect x="66" y="132" fill="#21aa2e"/>
<rect x="69" y="132" fill="#22aa2e"/>
<rect x="72" y="132" fill="#23aa2e"/>
<rect x="75" y="132" fill="#24aa2e"/>
<rect x="78" y="132" fill="#25aa2e"/>
<rect x="81" y="132" fill="#2fac2c"/>
<rect x="84" y="132" fill="#38ad2b"/>
<rect x="87" y="132" fill="#48b128"/>
<rect x="90" y="132" fill="#5bb525"/>
<rect x="93" y="132" fill="#6cb923"/>
<rect x="96" y="132" fill="#80be20"/>
<rect x="99" y="132" fill="#95c41c"/>
<rect x="102" y="132" fill="#a8c919"/>
<rect x="105" y="132" fill="#bacf14"/>
<rect x="108" y="132" fill="#cad50f"/>
<rect x="111" y="132" fill="#d9da0b"/>
<rect x="114" y="132" fill="#e5df08"/>
<rect x="15" y="135" fill="#00a67f"/>
<rect x="18" y="135" fill="#00a57c"/>
<rect x="21" y="135" fill="#00a579"/>
<rect x="24" y="135" fill="#00a475"/>
<rect x="27" y="135" fill="#00a371"/>
<rect x="30" y="135" fill="#00a36d"/>
<rect x="33" y="135" fill="#00a268"/>
<rect x="36" y="135" fill="#00a163"/>
<rect x="39" y="135" fill="#00a05d"/>
<rect x="42" y="135" fill="#009f58"/>
<rect x="45" y="135" fill="#009f52"/>
<rect x="48" y="135" fill="#009e4b"/>
<rect x="51" y="135" fill="#039f45"/>
<rect x="54" y="135" fill="#08a03f"/>
<rect x="57" y="135" fill="#0ea238"/>
<rect x="60" y="135" fill="#15a534"/>
<rect x="63" y="135" fill="#1da830"/>
<rect x="66" y="135" fill="#20a92f"/>
<rect x="69" y="135" fill="#22aa2e"/>
<rect x="72" y="135" fill="#23aa2e"/>
<rect x="75" y="135" fill="#23aa2e"/>
<rect x="78" y="135" fill="#24aa2e"/>
<rect x="81" y="135" fill="#2fac2c"/>
<rect x="84" y="135" fill="#38ad2b"/>
<rect x="87" y="135" fill="#49b128"/>
<rect x="90" y="135" fill="#5db525"/>
<rect x="93" y="135" fill="#6fb923"/>
<rect x="96" y="135" fill="#85bf1f"/>
<rect x="99" y="135" fill="#9ac51b"/>
<rect x="102" y="135" fill="#aecb18"/>
<rect x="105" y="135" fill="#bfd113"/>
<rect x="108" y="135" fill="#cfd70e"/>
<rect x="111" y="135" fill="#dfdc0a"/>
<rect x="114" y="135" fill="#e9e106"/>
<rect x="117" y="135" fill="#f1e504"/>
<rect x="15" y="138" fill="#00a682"/>
<rect x="18" y="138" fill="#00a67f"/>
<rect x="21" y="138" fill="#00a57c"/>
<rect x="24" y="138" fill="#00a579"/>
<rect x="27" y="138" fill="#00a475"/>
<rect x="30" y="138" fill="#00a371"/>
<rect x="33" y="138" fill="#00a26c"/>
<rect x="36" y="138" fill="#00a167"/>
<rect x="39" y="138" fill="#00a061"/>
<rect x="42" y="138" fill="#00a05b"/>
<rect x="45" y="138" fill="#009f56"/>
<rect x="48" y="138" fill="#009f4f"/>
<rect x="51" y="138" fill="#009e48"/>
<rect x="54" y="138" fill="#059f42"/>
<rect x="57" y="138" fill="#0ba13c"/>
<rect x="60" y="138" fill="#12a436"/>
<rect x="63" y="138" fill="#1ba830"/>
<rect x="66" y="138" fill="#1fa92f"/>
<rect x="69" y="138" fill="#22aa2e"/>
<rect x="72" y="138" fill="#23aa2e"/>
<rect x="75" y="138" fill="#23aa2e"/>
<rect x="78" y="138" fill="#24aa2e"/>
<rect x="81" y="138" fill="#2eac2c"/>
<rect x="84" y="138" fill="#38ad2b"/>
<rect x="87" y="138" fill="#4ab128"/>
<rect x="90" y="138" fill="#5fb625"/>
<rect x="93" y="138" fill="#71ba22"/>
<rect x="96" y="138" fill="#89c01e"/>
<rect x="99" y="138" fill="#9fc61a"/>
<rect x="102" y="138" fill="#b3cd16"/>
<rect x="105" y="138" fill="#c5d311"/>
<rect x="108" y="138" fill="#d6d90c"/>
<rect x="111" y="138" fill="#e5de08"/>
<rect x="114" y="138" fill="#ede305"/>
<rect x="117" y="138" fill="#f5e703"/>
<rect x="120" y="138" fill="#fceb02"/>
<rect x="15" y="141" fill="#00a785"/>
<rect x="18" y="141" fill="#00a682"/>
<rect x="21" y="141" fill="#00a67f"/>
<rect x="24" y="141" fill="#00a57c"/>
<rect x="27" y="141" fill="#00a579"/>
<rect x="30" y="141" fill="#00a475"/>
<rect x="33" y="141" fill="#00a370"/>
<rect x="36" y="141" fill="#00a26b"/>
<rect x="39" y="141" fill="#00a166"/>
<rect x="42" y="141" fill="#00a05f"/>
<rect x="45" y="141" fill="#00a05a"/>
<rect x="48" y="141" fill="#009f53"/>
<rect x="51" y="141" fill="#009e4c"/>
<rect x="54" y="141" fill="#039f45"/>
<rect x="57" y="141" fill="#08a03f"/>
<rect x="60" y="141" fill="#0fa337"/>
<rect x="63" y="141" fill="#18a632"/>
<rect x="66" y="141" fill="#1ea92f"/>
<rect x="69" y="141" fill="#22aa2e"/>
<rect x="72" y="141" fill="#23aa2e"/>
<rect x="75" y="141" fill="#23aa2e"/>
<rect x="78" y="141" fill="#24aa2e"/>
<rect x="81" y="141" fill="#2eac2c"/>
<rect x="84" y="141" fill="#39ad2b"/>
<rect x="87" y="141" fill="#4bb128"/>
<rect x="90" y="141" fill="#61b625"/>
<rect x="93" y="141" fill="#75bb22"/>
<rect x="96" y="141" fill="#8ec21d"/>
<rect x="99" y="141" fill="#a5c819"/>
<rect x="102" y="141" fill="#b9cf14"/>
<rect x="105" y="141" fill="#cbd50f"/>
<rect x="108" y="141" fill="#dcdb0a"/>
<rect x="111" y="141" fill="#e9e007"/>
<rect x="114" y="141" fill="#f1e504"/>
<rect x="117" y="141" fill="#f9e904"/>
<rect x="120" y="141" fill="#ffeb0a"/>
<rect x="123" y="141" fill="#ffe50a"/>
<rect x="15" y="144" fill="#00a788"/>
<rect x="18" y="144" fill="#00a786"/>
<rect x="21" y="144" fill="#00a683"/>
<rect x="24" y="144" fill="#00a67f"/>
<rect x="27" y="144" fill="#00a57c"/>
<rect x="30" y="144" fill="#00a578"/>
<rect x="33" y="144" fill="#00a474"/>
<rect x="36" y="144" fill="#00a370"/>
<rect x="39" y="144" fill="#00a26a"/>
<rect x="42" y="144" fill="#00a164"/>
<rect x="45" y="144" fill="#00a05d"/>
<rect x="48" y="144" fill="#009f57"/>
<rect x="51" y="144" fill="#009f50"/>
<rect x="54" y="144" fill="#009e48"/>
<rect x="57" y="144" fill="#05a042"/>
<rect x="60" y="144" fill="#0ca13a"/>
<rect x="63" y="144" fill="#15a534"/>
<rect x="66" y="144" fill="#1da830"/>
<rect x="69" y="144" fill="#21aa2e"/>
<rect x="72" y="144" fill="#23aa2e"/>
<rect x="75" y="144" fill="#23aa2e"/>
<rect x="78" y="144" fill="#24aa2e"/>
<rect x="81" y="144" fill="#2eac2c"/>
<rect x="84" y="144" fill="#39ad2b"/>
<rect x="87" y="144" fill="#4db228"/>
<rect x="90" y="144" fill="#63b724"/>
<rect x="93" y="144" fill="#79bc21"/>
<rect x="96" y="144" fill="#93c31c"/>
<rect x="99" y="144" fill="#abca18"/>
<rect x="102" y="144" fill="#bfd113"/>
<rect x="105" y="144" fill="#d2d80d"/>
<rect x="108" y="144" fill="#e3de08"/>
<rect x="111" y="144" fill="#ede305"/>
<rect x="114" y="144" fill="#f6e706"/>
<rect x="117" y="144" fill="#feec0d"/>
<rect x="120" y="144" fill="#ffe815"/>
<rect x="123" y="144" fill="#ffe109"/>
<rect x="15" y="147" fill="#00a88b"/>
<rect x="18" y="147" fill="#00a789"/>
<rect x="21" y="147" fill="#00a786"/>
<rect x="24" y="147" fill="#00a683"/>
<rect x="27" y="147" fill="#00a67f"/>
<rect x="30" y="147" fill="#00a57c"/>
<rect x="33" y="147" fill="#00a578"/>
<rect x="36" y="147" fill="#00a474"/>
<rect x="39" y="147" fill="#00a36f"/>
<rect x="42" y="147" fill="#00a269"/>
<rect x="45" y="147" fill="#00a162"/>
<rect x="48" y="147" fill="#00a05b"/>
<rect x="51" y="147" fill="#009f55"/>
<rect x="54" y="147" fill="#009e4d"/>
<rect x="57" y="147" fill="#039f45"/>
<rect x="60" y="147" fill="#09a13e"/>
<rect x="63" y="147" fill="#11a336"/>
<rect x="66" y="147" fill="#1ca830"/>
<rect x="69" y="147" fill="#20a92f"/>
<rect x="72" y="147" fill="#22aa2e"/>
<rect x="75" y="147" fill="#23aa2e"/>
<rect x="78" y="147" fill="#24aa2e"/>
<rect x="81" y="147" fill="#2dac2c"/>
<rect x="84" y="147" fill="#39ad2b"/>
<rect x="87" y="147" fill="#4fb227"/>
<rect x="90" y="147" fill="#66b724"/>
<rect x="93" y="147" fill="#7ebd20"/>
<rect x="96" y="147" fill="#99c51b"/>
<rect x="99" y="147" fill="#b1cc17"/>
<rect x="102" y="147" fill="#c6d311"/>
<rect x="105" y="147" fill="#d9da0b"/>
<rect x="108" y="147" fill="#e8e007"/>
<rect x="111" y="147" fill="#f2e507"/>
<rect x="114" y="147" fill="#fbeb10"/>
<rect x="117" y="147" fill="#ffeb1c"/>
<rect x="120" y="147" fill="#ffe414"/>
<rect x="123" y="147" fill="#ffdd08"/>
<rect x="126" y="147" fill="#ffd601"/>
<rect x="15" y="150" fill="#00a88e"/>
<rect x="18" y="150" fill="#00a88c"/>
<rect x="21" y="150" fill="#00a78a"/>
<rect x="24" y="150" fill="#00a787"/>
<rect x="27" y="150" fill="#00a683"/>
<rect x="30" y="150" fill="#00a680"/>
<rect x="33" y="150" fill="#00a57c"/>
<rect x="36" y="150" fill="#00a578"/>
<rect x="39" y="150" fill="#00a473"/>
<rect x="42" y="150" fill="#00a36e"/>
<rect x="45" y="150" fill="#00a267"/>
<rect x="48" y="150" fill="#00a060"/>
<rect x="51" y="150" fill="#00a059"/>
<rect x="54" y="150" fill="#009f52"/>
<rect x="57" y="150" fill="#009e48"/>
<rect x="60" y="150" fill="#06a041"/>
<rect x="63" y="150" fill="#0da239"/>
<rect x="66" y="150" fill="#18a632"/>
<rect x="69" y="150" fill="#1fa92f"/>
<rect x="72" y="150" fill="#22aa2e"/>
<rect x="75" y="150" fill="#23aa2e"/>
<rect x="78" y="150" fill="#24aa2e"/>
<rect x="81" y="150" fill="#2cab2d"/>
<rect x="84" y="150" fill="#39ad2b"/>
<rect x="87" y="150" fill="#50b227"/>
<rect x="90" y="150" fill="#69b823"/>
<rect x="93" y="150" fill="#84bf1f"/>
<rect x="96" y="150" fill="#9fc61a"/>
<rect x="99" y="150" fill="#b8ce15"/>
<rect x="102" y="150" fill="#cdd60e"/>
<rect x="105" y="150" fill="#e1dd09"/>
<rect x="108" y="150" fill="#ede308"/>
<rect x="111" y="150" fill="#f7e913"/>
<rect x="114" y="150" fill="#ffee20"/>
<rect x="117" y="150" fill="#ffe823"/>
<rect x="120" y="150" fill="#ffe013"/>
<rect x="123" y="150" fill="#ffd806"/>
<rect x="126" y="150" fill="#ffd100"/>
<rect x="129" y="150" fill="#ffcb00"/>
<rect x="15" y="153" fill="#00a892"/>
<rect x="18" y="153" fill="#00a88f"/>
<rect x="21" y="153" fill="#00a88d"/>
<rect x="24" y="153" fill="#00a78a"/>
<rect x="27" y="153" fill="#00a787"/>
<rect x="30" y="153" fill="#00a784"/>
<rect x="33" y="153" fill="#00a680"/>
<rect x="36" y="153" fill="#00a57c"/>
<rect x="39" y="153" fill="#00a478"/>
<rect x="42" y="153" fill="#00a473"/>
<rect x="45" y="153" fill="#00a26d"/>
<rect x="48" y="153" fill="#00a166"/>
<rect x="51" y="153" fill="#00a05e"/>
<rect x="54" y="153" fill="#009f57"/>
<rect x="57" y="153" fill="#009f4e"/>
<rect x="60" y="153" fill="#039f45"/>
<rect x="63" y="153" fill="#0aa13d"/>
<rect x="66" y="153" fill="#14a435"/>
<rect x="69" y="153" fill="#1da830"/>
<rect x="72" y="153" fill="#22aa2e"/>
<rect x="75" y="153" fill="#23aa2e"/>
<rect x="78" y="153" fill="#24aa2e"/>
<rect x="81" y="153" fill="#2cab2d"/>
<rect x="84" y="153" fill="#39ae2a"/>
<rect x="87" y="153" fill="#52b327"/>
<rect x="90" y="153" fill="#6cb823"/>
<rect x="93" y="153" fill="#8ac01e"/>
<rect x="96" y="153" fill="#a6c819"/>
<rect x="99" y="153" fill="#bfd113"/>
<rect x="102" y="153" fill="#d5d90c"/>
<rect x="105" y="153" fill="#e7e009"/>
<rect x="108" y="153" fill="#f3e715"/>
<rect x="111" y="153" fill="#fced26"/>
<rect x="114" y="153" fill="#ffec35"/>
<rect x="117" y="153" fill="#ffe321"/>
<rect x="120" y="153" fill="#ffdb10"/>
<rect x="123" y="153" fill="#ffd304"/>
<rect x="126" y="153" fill="#ffcc00"/>
<rect x="129" y="153" fill="#fec600"/>
<rect x="132" y="153" fill="#fdc100"/>
<rect x="15" y="156" fill="#00a995"/>
<rect x="18" y="156" fill="#00a893"/>
<rect x="21" y="156" fill="#00a890"/>
<rect x="24" y="156" fill="#00a88e"/>
<rect x="27" y="156" fill="#00a78b"/>
<rect x="30" y="156" fill="#00a788"/>
<rect x="33" y="156" fill="#00a784"/>
<rect x="36" y="156" fill="#00a680"/>
<rect x="39" y="156" fill="#00a57c"/>
<rect x="42" y="156" fill="#00a477"/>
<rect x="45" y="156" fill="#00a372"/>
<rect x="48" y="156" fill="#00a26b"/>
<rect x="51" y="156" fill="#00a164"/>
<rect x="54" y="156" fill="#00a05b"/>
<rect x="57" y="156" fill="#009f53"/>
<rect x="60" y="156" fill="#009e49"/>
<rect x="63" y="156" fill="#06a041"/>
<rect x="66" y="156" fill="#0fa337"/>
<rect x="69" y="156" fill="#1ca830"/>
<rect x="72" y="156" fill="#21aa2e"/>
<rect x="75" y="156" fill="#23aa2e"/>
<rect x="78" y="156" fill="#24aa2e"/>
<rect x="81" y="156" fill="#2bab2d"/>
<rect x="84" y="156" fill="#39ae2a"/>
<rect x="87" y="156" fill="#55b326"/>
<rect x="90" y="156" fill="#70b922"/>
<rect x="93" y="156" fill="#90c21d"/>
<rect x="96" y="156" fill="#aecb18"/>
<rect x="99" y="156" fill="#c7d410"/>
<rect x="102" y="156" fill="#dedc0a"/>
<rect x="105" y="156" fill="#eee416"/>
<rect x="108" y="156" fill="#f9ec2a"/>
<rect x="111" y="156" fill="#ffef3c"/>
<rect x="114" y="156" fill="#ffe733"/>
<rect x="117" y="156" fill="#ffde1f"/>
<rect x="120" y="156" fill="#ffd50d"/>
<rect x="123" y="156" fill="#ffcd02"/>
<rect x="126" y="156" fill="#fec600"/>
<rect x="129" y="156" fill="#fdc100"/>
<rect x="132" y="156" fill="#fdbb00"/>
<rect x="15" y="159" fill="#00a998"/>
<rect x="18" y="159" fill="#00a996"/>
<rect x="21" y="159" fill="#00a994"/>
<rect x="24" y="159" fill="#00a891"/>
<rect x="27" y="159" fill="#00a88f"/>
<rect x="30" y="159" fill="#00a88c"/>
<rect x="33" y="159" fill="#00a789"/>
<rect x="36" y="159" fill="#00a785"/>
<rect x="39" y="159" fill="#00a681"/>
<rect x="42" y="159" fill="#00a57c"/>
<rect x="45" y="159" fill="#00a477"/>
<rect x="48" y="159" fill="#00a371"/>
<rect x="51" y="159" fill="#00a26a"/>
<rect x="54" y="159" fill="#00a061"/>
<rect x="57" y="159" fill="#009f59"/>
<rect x="60" y="159" fill="#009f4f"/>
<rect x="63" y="159" fill="#039f45"/>
<rect x="66" y="159" fill="#0ba13b"/>
<rect x="69" y="159" fill="#17a633"/>
<rect x="72" y="159" fill="#1fa92f"/>
<rect x="75" y="159" fill="#23aa2e"/>
<rect x="78" y="159" fill="#23aa2e"/>
<rect x="81" y="159" fill="#2aab2d"/>
<rect x="84" y="159" fill="#39ae2a"/>
<rect x="87" y="159" fill="#57b426"/>
<rect x="90" y="159" fill="#74ba22"/>
<rect x="93" y="159" fill="#97c41c"/>
<rect x="96" y="159" fill="#b6ce15"/>
<rect x="99" y="159" fill="#d0d70e"/>
<rect x="102" y="159" fill="#e7e114"/>
<rect x="105" y="159" fill="#f5ea2d"/>
<rect x="108" y="159" fill="#fef042"/>
<rect x="111" y="159" fill="#ffec48"/>
<rect x="114" y="159" fill="#ffe331"/>
<rect x="117" y="159" fill="#ffd91b"/>
<rect x="120" y="159" fill="#ffcf09"/>
<rect x="123" y="159" fill="#fec700"/>
<rect x="126" y="159" fill="#fdc000"/>
<rect x="129" y="159" fill="#fcbb00"/>
<rect x="132" y="159" fill="#fcb500"/>
<rect x="135" y="159" fill="#fbb000"/>
<rect x="18" y="162" fill="#00a999"/>
<rect x="21" y="162" fill="#00a997"/>
<rect x="24" y="162" fill="#00a995"/>
<rect x="27" y="162" fill="#00a892"/>
<rect x="30" y="162" fill="#00a890"/>
<rect x="33" y="162" fill="#00a88d"/>
<rect x="36" y="162" fill="#00a789"/>
<rect x="39" y="162" fill="#00a786"/>
<rect x="42" y="162" fill="#00a681"/>
<rect x="45" y="162" fill="#00a57c"/>
<rect x="48" y="162" fill="#00a477"/>
<rect x="51" y="162" fill="#00a370"/>
<rect x="54" y="162" fill="#00a268"/>
<rect x="57" y="162" fill="#00a05e"/>
<rect x="60" y="162" fill="#009f55"/>
<rect x="63" y="162" fill="#009e4a"/>
<rect x="66" y="162" fill="#07a040"/>
<rect x="69" y="162" fill="#12a436"/>
<rect x="72" y="162" fill="#1ea92f"/>
<rect x="75" y="162" fill="#22aa2e"/>
<rect x="78" y="162" fill="#23aa2e"/>
<rect x="81" y="162" fill="#29ab2d"/>
<rect x="84" y="162" fill="#3aae2a"/>
<rect x="87" y="162" fill="#5ab526"/>
<rect x="90" y="162" fill="#7abc21"/>
<rect x="93" y="162" fill="#a0c61a"/>
<rect x="96" y="162" fill="#bfd113"/>
<rect x="99" y="162" fill="#dbdb11"/>
<rect x="102" y="162" fill="#efe72e"/>
<rect x="105" y="162" fill="#fbef48"/>
<rect x="108" y="162" fill="#fff05d"/>
<rect x="111" y="162" fill="#ffe746"/>
<rect x="114" y="162" fill="#ffdd2d"/>
<rect x="117" y="162" fill="#ffd215"/>
<rect x="120" y="162" fill="#fec804"/>
<rect x="123" y="162" fill="#fdc000"/>
<rect x="126" y="162" fill="#fcba00"/>
<rect x="129" y="162" fill="#fcb400"/>
<rect x="132" y="162" fill="#fbaf00"/>
<rect x="135" y="162" fill="#faaa00"/>
<rect x="138" y="162" fill="#faa600"/>
<rect x="18" y="165" fill="#00aa9c"/>
<rect x="21" y="165" fill="#00aa9a"/>
<rect x="24" y="165" fill="#00a998"/>
<rect x="27" y="165" fill="#00a996"/>
<rect x="30" y="165" fill="#00a994"/>
<rect x="33" y="165" fill="#00a891"/>
<rect x="36" y="165" fill="#00a88e"/>
<rect x="39" y="165" fill="#00a78a"/>
<rect x="42" y="165" fill="#00a786"/>
<rect x="45" y="165" fill="#00a681"/>
<rect x="48" y="165" fill="#00a57c"/>
<rect x="51" y="165" fill="#00a476"/>
<rect x="54" y="165" fill="#00a36f"/>
<rect x="57" y="165" fill="#00a166"/>
<rect x="60" y="165" fill="#00a05c"/>
<rect x="63" y="165" fill="#009f51"/>
<rect x="66" y="165" fill="#039f45"/>
<rect x="69" y="165" fill="#0da239"/>
<rect x="72" y="165" fill="#1ca830"/>
<rect x="75" y="165" fill="#22aa2e"/>
<rect x="78" y="165" fill="#23aa2e"/>
<rect x="81" y="165" fill="#28ab2d"/>
<rect x="84" y="165" fill="#3aae2a"/>
<rect x="87" y="165" fill="#5db525"/>
<rect x="90" y="165" fill="#82be1f"/>
<rect x="93" y="165" fill="#a9c919"/>
<rect x="96" y="165" fill="#cad515"/>
<rect x="99" y="165" fill="#e8e32a"/>
<rect x="102" y="165" fill="#f7ed4d"/>
<rect x="105" y="165" fill="#fff365"/>
<rect x="108" y="165" fill="#ffec5d"/>
<rect x="111" y="165" fill="#ffe242"/>
<rect x="114" y="165" fill="#ffd626"/>
<rect x="117" y="165" fill="#feca0e"/>
<rect x="120" y="165" fill="#fdc003"/>
<rect x="123" y="165" fill="#fcb900"/>
<rect x="126" y="165" fill="#fbb300"/>
<rect x="129" y="165" fill="#fbad00"/>
<rect x="132" y="165" fill="#faa800"/>
<rect x="135" y="165" fill="#f9a400"/>
<rect x="138" y="165" fill="#f9a000"/>
<rect x="141" y="165" fill="#f89c00"/>
<rect x="18" y="168" fill="#00aa9f"/>
<rect x="21" y="168" fill="#00aa9e"/>
<rect x="24" y="168" fill="#00aa9c"/>
<rect x="27" y="168" fill="#00a99a"/>
<rect x="30" y="168" fill="#00a998"/>
<rect x="33" y="168" fill="#00a995"/>
<rect x="36" y="168" fill="#00a892"/>
<rect x="39" y="168" fill="#00a88f"/>
<rect x="42" y="168" fill="#00a88b"/>
<rect x="45" y="168" fill="#00a787"/>
<rect x="48" y="168" fill="#00a682"/>
<rect x="51" y="168" fill="#00a57c"/>
<rect x="54" y="168" fill="#00a476"/>
<rect x="57" y="168" fill="#00a36d"/>
<rect x="60" y="168" fill="#00a163"/>
<rect x="63" y="168" fill="#009f58"/>
<rect x="66" y="168" fill="#009e4b"/>
<rect x="69" y="168" fill="#08a03f"/>
<rect x="72" y="168" fill="#16a633"/>
<rect x="75" y="168" fill="#21aa2e"/>
<rect x="78" y="168" fill="#23aa2e"/>
<rect x="81" y="168" fill="#26aa2e"/>
<rect x="84" y="168" fill="#3aae2a"/>
<rect x="87" y="168" fill="#61b625"/>
<rect x="90" y="168" fill="#8ac11e"/>
<rect x="93" y="168" fill="#b5ce1b"/>
<rect x="96" y="168" fill="#d9dc24"/>
<rect x="99" y="168" fill="#f1ea4d"/>
<rect x="102" y="168" fill="#fdf36c"/>
<rect x="105" y="168" fill="#fff075"/>
<rect x="108" y="168" fill="#ffe759"/>
<rect x="111" y="168" fill="#ffdb3b"/>
<rect x="114" y="168" fill="#fece1d"/>
<rect x="117" y="168" fill="#fdc20c"/>
<rect x="120" y="168" fill="#fcba05"/>
<rect x="123" y="168" fill="#fbb201"/>
<rect x="126" y="168" fill="#faab00"/>
<rect x="129" y="168" fill="#faa600"/>
<rect x="132" y="168" fill="#f9a200"/>
<rect x="135" y="168" fill="#f89e00"/>
<rect x="138" y="168" fill="#f89a00"/>
<rect x="141" y="168" fill="#f79700"/>
<rect x="18" y="171" fill="#00aaa3"/>
<rect x="21" y="171" fill="#00aaa1"/>
<rect x="24" y="171" fill="#00aa9f"/>
<rect x="27" y="171" fill="#00aa9d"/>
<rect x="30" y="171" fill="#00aa9b"/>
<rect x="33" y="171" fill="#00a999"/>
<rect x="36" y="171" fill="#00a997"/>
<rect x="39" y="171" fill="#00a994"/>
<rect x="42" y="171" fill="#00a891"/>
<rect x="45" y="171" fill="#00a88d"/>
<rect x="48" y="171" fill="#00a788"/>
<rect x="51" y="171" fill="#00a683"/>
<rect x="54" y="171" fill="#00a57c"/>
<rect x="57" y="171" fill="#00a475"/>
<rect x="60" y="171" fill="#00a26c"/>
<rect x="63" y="171" fill="#00a05f"/>
<rect x="66" y="171" fill="#009f53"/>
<rect x="69" y="171" fill="#039f45"/>
<rect x="72" y="171" fill="#10a337"/>
<rect x="75" y="171" fill="#1fa92f"/>
<rect x="78" y="171" fill="#23aa2e"/>
<rect x="81" y="171" fill="#24aa2e"/>
<rect x="84" y="171" fill="#3bae2a"/>
<rect x="87" y="171" fill="#66b724"/>
<rect x="90" y="171" fill="#95c41d"/>
<rect x="93" y="171" fill="#c5d52b"/>
<rect x="96" y="171" fill="#e9e647"/>
<rect x="99" y="171" fill="#f9f172"/>
<rect x="102" y="171" fill="#fff48a"/>
<rect x="105" y="171" fill="#ffec73"/>
<rect x="108" y="171" fill="#ffe053"/>
<rect x="111" y="171" fill="#fed230"/>
<rect x="114" y="171" fill="#fdc51a"/>
<rect x="117" y="171" fill="#fcbb0f"/>
<rect x="120" y="171" fill="#fbb207"/>
<rect x="123" y="171" fill="#faaa02"/>
<rect x="126" y="171" fill="#f9a400"/>
<rect x="129" y="171" fill="#f9a000"/>
<rect x="132" y="171" fill="#f89b00"/>
<rect x="135" y="171" fill="#f79700"/>
<rect x="138" y="171" fill="#f79400"/>
<rect x="141" y="171" fill="#f69000"/>
<rect x="144" y="171" fill="#f68d00"/>
<rect x="18" y="174" fill="#00aaa6"/>
<rect x="21" y="174" fill="#00aaa5"/>
<rect x="24" y="174" fill="#00aaa3"/>
<rect x="27" y="174" fill="#00aaa1"/>
<rect x="30" y="174" fill="#00aa9f"/>
<rect x="33" y="174" fill="#00aa9d"/>
<rect x="36" y="174" fill="#00aa9b"/>
<rect x="39" y="174" fill="#00a999"/>
<rect x="42" y="174" fill="#00a996"/>
<rect x="45" y="174" fill="#00a892"/>
<rect x="48" y="174" fill="#00a88e"/>
<rect x="51" y="174" fill="#00a789"/>
<rect x="54" y="174" fill="#00a683"/>
<rect x="57" y="174" fill="#00a57c"/>
<rect x="60" y="174" fill="#00a474"/>
<rect x="63" y="174" fill="#00a269"/>
<rect x="66" y="174" fill="#00a05c"/>
<rect x="69" y="174" fill="#009e4d"/>
<rect x="72" y="174" fill="#09a13d"/>
<rect x="75" y="174" fill="#1ca830"/>
<rect x="78" y="174" fill="#22aa2e"/>
<rect x="81" y="174" fill="#24aa2e"/>
<rect x="84" y="174" fill="#3bae2a"/>
<rect x="87" y="174" fill="#6bb823"/>
<rect x="90" y="174" fill="#a8cb2d"/>
<rect x="93" y="174" fill="#d8df46"/>
<rect x="96" y="174" fill="#f4ef73"/>
<rect x="99" y="174" fill="#fef793"/>
<rect x="102" y="174" fill="#fff18d"/>
<rect x="105" y="174" fill="#ffe66d"/>
<rect x="108" y="174" fill="#fed847"/>
<rect x="111" y="174" fill="#fdca2d"/>
<rect x="114" y="174" fill="#fcbf1f"/>
<rect x="117" y="174" fill="#fbb413"/>
<rect x="120" y="174" fill="#faaa0a"/>
<rect x="123" y="174" fill="#f9a303"/>
<rect x="126" y="174" fill="#f89d00"/>
<rect x="129" y="174" fill="#f79800"/>
<rect x="132" y="174" fill="#f79400"/>
<rect x="135" y="174" fill="#f69000"/>
<rect x="138" y="174" fill="#f58d00"/>
<rect x="141" y="174" fill="#f58a00"/>
<rect x="144" y="174" fill="#f48600"/>
<rect x="147" y="174" fill="#f48400"/>
<rect x="18" y="177" fill="#00aba9"/>
<rect x="21" y="177" fill="#00aba8"/>
<rect x="24" y="177" fill="#00aba7"/>
<rect x="27" y="177" fill="#00aaa5"/>
<rect x="30" y="177" fill="#00aaa4"/>
<rect x="33" y="177" fill="#00aaa2"/>
<rect x="36" y="177" fill="#00aaa0"/>
<rect x="39" y="177" fill="#00aa9d"/>
<rect x="42" y="177" fill="#00aa9b"/>
<rect x="45" y="177" fill="#00a998"/>
<rect x="48" y="177" fill="#00a994"/>
<rect x="51" y="177" fill="#00a890"/>
<rect x="54" y="177" fill="#00a78b"/>
<rect x="57" y="177" fill="#00a784"/>
<rect x="60" y="177" fill="#00a57d"/>
<rect x="63" y="177" fill="#00a473"/>
<rect x="66" y="177" fill="#00a166"/>
<rect x="69" y="177" fill="#009f57"/>
<rect x="72" y="177" fill="#039f45"/>
<rect x="75" y="177" fill="#15a534"/>
<rect x="78" y="177" fill="#22aa2e"/>
<rect x="81" y="177" fill="#24aa2e"/>
<rect x="84" y="177" fill="#3daf2c"/>
<rect x="87" y="177" fill="#77bc2a"/>
<rect x="90" y="177" fill="#c0d64b"/>
<rect x="93" y="177" fill="#eae96b"/>
<rect x="96" y="177" fill="#fbf59a"/>
<rect x="99" y="177" fill="#fff5a7"/>
<rect x="102" y="177" fill="#ffec88"/>
<rect x="105" y="177" fill="#ffde62"/>
<rect x="108" y="177" fill="#fdcf44"/>
<rect x="111" y="177" fill="#fcc333"/>
<rect x="114" y="177" fill="#fbb724"/>
<rect x="117" y="177" fill="#faad17"/>
<rect x="120" y="177" fill="#f9a30c"/>
<rect x="123" y="177" fill="#f89b05"/>
<rect x="126" y="177" fill="#f79501"/>
<rect x="129" y="177" fill="#f69000"/>
<rect x="132" y="177" fill="#f58c00"/>
<rect x="135" y="177" fill="#f58900"/>
<rect x="138" y="177" fill="#f48500"/>
<rect x="141" y="177" fill="#f48300"/>
<rect x="144" y="177" fill="#f48001"/>
<rect x="147" y="177" fill="#f37e01"/>
<rect x="150" y="177" fill="#f37c02"/>
<rect x="18" y="180" fill="#00abad"/>
<rect x="21" y="180" fill="#00abac"/>
<rect x="24" y="180" fill="#00abaa"/>
<rect x="27" y="180" fill="#00aba9"/>
<rect x="30" y="180" fill="#00aba8"/>
<rect x="33" y="180" fill="#00aba6"/>
<rect x="36" y="180" fill="#00aaa4"/>
<rect x="39" y="180" fill="#00aaa2"/>
<rect x="42" y="180" fill="#00aaa0"/>
<rect x="45" y="180" fill="#00aa9d"/>
<rect x="48" y="180" fill="#00a99a"/>
<rect x="51" y="180" fill="#00a996"/>
<rect x="54" y="180" fill="#00a892"/>
<rect x="57" y="180" fill="#00a88c"/>
<rect x="60" y="180" fill="#00a786"/>
<rect x="63" y="180" fill="#00a57d"/>
<rect x="66" y="180" fill="#00a371"/>
<rect x="69" y="180" fill="#00a061"/>
<rect x="72" y="180" fill="#009f4f"/>
<rect x="75" y="180" fill="#0ca13a"/>
<rect x="78" y="180" fill="#20a92f"/>
<rect x="81" y="180" fill="#27ab31"/>
<rect x="84" y="180" fill="#4cb43a"/>
<rect x="87" y="180" fill="#90c63f"/>
<rect x="90" y="180" fill="#d8e36f"/>
<rect x="93" y="180" fill="#f7f39c"/>
<rect x="96" y="180" fill="#fff9ba"/>
<rect x="99" y="180" fill="#fff1a4"/>
<rect x="102" y="180" fill="#ffe47e"/>
<rect x="105" y="180" fill="#fed55e"/>
<rect x="108" y="180" fill="#fcc94b"/>
<rect x="111" y="180" fill="#fbbc3a"/>
<rect x="114" y="180" fill="#fab029"/>
<rect x="117" y="180" fill="#f9a61a"/>
<rect x="120" y="180" fill="#f79c0e"/>
<rect x="123" y="180" fill="#f69306"/>
<rect x="126" y="180" fill="#f58c01"/>
<rect x="129" y="180" fill="#f58800"/>
<rect x="132" y="180" fill="#f48400"/>
<rect x="135" y="180" fill="#f48101"/>
<rect x="138" y="180" fill="#f37f01"/>
<rect x="141" y="180" fill="#f37c01"/>
<rect x="144" y="180" fill="#f37a02"/>
<rect x="147" y="180" fill="#f27802"/>
<rect x="150" y="180" fill="#f27603"/>
<rect x="18" y="183" fill="#00abb0"/>
<rect x="21" y="183" fill="#00abaf"/>
<rect x="24" y="183" fill="#00abae"/>
<rect x="27" y="183" fill="#00abad"/>
<rect x="30" y="183" fill="#00abac"/>
<rect x="33" y="183" fill="#00abaa"/>
<rect x="36" y="183" fill="#00aba9"/>
<rect x="39" y="183" fill="#00aba7"/>
<rect x="42" y="183" fill="#00aaa5"/>
<rect x="45" y="183" fill="#00aaa3"/>
<rect x="48" y="183" fill="#00aaa0"/>
<rect x="51" y="183" fill="#00aa9d"/>
<rect x="54" y="183" fill="#00a999"/>
<rect x="57" y="183" fill="#00a994"/>
<rect x="60" y="183" fill="#00a88f"/>
<rect x="63" y="183" fill="#00a787"/>
<rect x="66" y="183" fill="#00a57d"/>
<rect x="69" y="183" fill="#00a36f"/>
<rect x="72" y="183" fill="#00a05c"/>
<rect x="75" y="183" fill="#07a047"/>
<rect x="78" y="183" fill="#28ac3a"/>
<rect x="81" y="183" fill="#39b242"/>
<rect x="84" y="183" fill="#67bf55"/>
<rect x="87" y="183" fill="#b4d66a"/>
<rect x="90" y="183" fill="#ecee96"/>
<rect x="93" y="183" fill="#fdfac2"/>
<rect x="96" y="183" fill="#fff6bf"/>
<rect x="99" y="183" fill="#ffeb9b"/>
<rect x="102" y="183" fill="#fedc7b"/>
<rect x="105" y="183" fill="#fdcf66"/>
<rect x="108" y="183" fill="#fbc252"/>
<rect x="111" y="183" fill="#fab53f"/>
<rect x="114" y="183" fill="#f9a92d"/>
<rect x="117" y="183" fill="#f79d1d"/>
<rect x="120" y="183" fill="#f69310"/>
<rect x="123" y="183" fill="#f58b0a"/>
<rect x="126" y="183" fill="#f48506"/>
<rect x="129" y="183" fill="#f48003"/>
<rect x="132" y="183" fill="#f37d02"/>
<rect x="135" y="183" fill="#f37a02"/>
<rect x="138" y="183" fill="#f27702"/>
<rect x="141" y="183" fill="#f27503"/>
<rect x="144" y="183" fill="#f27303"/>
<rect x="147" y="183" fill="#f27104"/>
<rect x="150" y="183" fill="#f16f04"/>
<rect x="153" y="183" fill="#f16d04"/>
<rect x="21" y="186" fill="#00abb3"/>
<rect x="24" y="186" fill="#00abb2"/>
<rect x="27" y="186" fill="#00abb1"/>
<rect x="30" y="186" fill="#00abb0"/>
<rect x="33" y="186" fill="#00abaf"/>
<rect x="36" y="186" fill="#00abad"/>
<rect x="39" y="186" fill="#00abac"/>
<rect x="42" y="186" fill="#00abaa"/>
<rect x="45" y="186" fill="#00aba8"/>
<rect x="48" y="186" fill="#00aba6"/>
<rect x="51" y="186" fill="#00aaa3"/>
<rect x="54" y="186" fill="#00aaa0"/>
<rect x="57" y="186" fill="#00aa9c"/>
<rect x="60" y="186" fill="#00a998"/>
<rect x="63" y="186" fill="#00a891"/>
<rect x="66" y="186" fill="#00a789"/>
<rect x="69" y="186" fill="#00a57d"/>
<rect x="72" y="186" fill="#07a570"/>
<rect x="75" y="186" fill="#19a864"/>
<rect x="78" y="186" fill="#3bb359"/>
<rect x="81" y="186" fill="#57be5f"/>
<rect x="84" y="186" fill="#8ace7a"/>
<rect x="87" y="186" fill="#d6e79b"/>
<rect x="90" y="186" fill="#faf8c5"/>
<rect x="93" y="186" fill="#fffbd7"/>
<rect x="96" y="186" fill="#fff1b8"/>
<rect x="99" y="186" fill="#fee399"/>
<rect x="102" y="186" fill="#fdd783"/>
<rect x="105" y="186" fill="#fbc96e"/>
<rect x="108" y="186" fill="#fabc58"/>
<rect x="111" y="186" fill="#f8ae43"/>
<rect x="114" y="186" fill="#f7a131"/>
<rect x="117" y="186" fill="#f69726"/>
<rect x="120" y="186" fill="#f58f1d"/>
<rect x="123" y="186" fill="#f48715"/>
<rect x="126" y="186" fill="#f3810f"/>
<rect x="129" y="186" fill="#f37b0a"/>
<rect x="132" y="186" fill="#f27606"/>
<rect x="135" y="186" fill="#f27204"/>
<rect x="138" y="186" fill="#f16f04"/>
<rect x="141" y="186" fill="#f16d04"/>
<rect x="144" y="186" fill="#f16b05"/>
<rect x="147" y="186" fill="#f16905"/>
<rect x="150" y="186" fill="#f06805"/>
<rect x="153" y="186" fill="#f06606"/>
<rect x="156" y="186" fill="#f06406"/>
<rect x="21" y="189" fill="#00abb6"/>
<rect x="24" y="189" fill="#00abb5"/>
<rect x="27" y="189" fill="#00abb5"/>
<rect x="30" y="189" fill="#00abb4"/>
<rect x="33" y="189" fill="#00abb3"/>
<rect x="36" y="189" fill="#00abb2"/>
<rect x="39" y="189" fill="#00abb1"/>
<rect x="42" y="189" fill="#00abb0"/>
<rect x="45" y="189" fill="#00abae"/>
<rect x="48" y="189" fill="#00abac"/>
<rect x="51" y="189" fill="#00abaa"/>
<rect x="54" y="189" fill="#00aba8"/>
<rect x="57" y="189" fill="#00aaa4"/>
<rect x="60" y="189" fill="#00aaa1"/>
<rect x="63" y="189" fill="#00aa9c"/>
<rect x="66" y="189" fill="#00a995"/>
<rect x="69" y="189" fill="#06aa8f"/>
<rect x="72" y="189" fill="#1baf8b"/>
<rect x="75" y="189" fill="#3ab789"/>
<rect x="78" y="189" fill="#5cc186"/>
<rect x="81" y="189" fill="#83cf8a"/>
<rect x="84" y="189" fill="#b2dea4"/>
<rect x="87" y="189" fill="#eff4c6"/>
<rect x="90" y="189" fill="#fffde5"/>
<rect x="93" y="189" fill="#fff7d4"/>
<rect x="96" y="189" fill="#feebb7"/>
<rect x="99" y="189" fill="#fddfa1"/>
<rect x="102" y="189" fill="#fcd18a"/>
<rect x="105" y="189" fill="#fac373"/>
<rect x="108" y="189" fill="#f9b55e"/>
<rect x="111" y="189" fill="#f7aa50"/>
<rect x="114" y="189" fill="#f6a044"/>
<rect x="117" y="189" fill="#f59638"/>
<rect x="120" y="189" fill="#f48d2d"/>
<rect x="123" y="189" fill="#f38422"/>
<rect x="126" y="189" fill="#f37c1a"/>
<rect x="129" y="189" fill="#f27512"/>
<rect x="132" y="189" fill="#f16f0c"/>
<rect x="135" y="189" fill="#f16a08"/>
<rect x="138" y="189" fill="#f06606"/>
<rect x="141" y="189" fill="#f06406"/>
<rect x="144" y="189" fill="#f06306"/>
<rect x="147" y="189" fill="#f06207"/>
<rect x="150" y="189" fill="#ef6007"/>
<rect x="153" y="189" fill="#ef5f07"/>
<rect x="156" y="189" fill="#ef5e08"/>
<rect x="159" y="189" fill="#ef5d08"/>
<rect x="21" y="192" fill="#00acb9"/>
<rect x="24" y="192" fill="#00acb9"/>
<rect x="27" y="192" fill="#00acb8"/>
<rect x="30" y="192" fill="#00acb8"/>
<rect x="33" y="192" fill="#00acb7"/>
<rect x="36" y="192" fill="#00acb6"/>
<rect x="39" y="192" fill="#00abb6"/>
<rect x="42" y="192" fill="#00abb5"/>
<rect x="45" y="192" fill="#00abb4"/>
<rect x="48" y="192" fill="#00abb2"/>
<rect x="51" y="192" fill="#00abb1"/>
<rect x="54" y="192" fill="#00abaf"/>
<rect x="57" y="192" fill="#00abad"/>
<rect x="60" y="192" fill="#00abaa"/>
<rect x="63" y="192" fill="#00aba6"/>
<rect x="66" y="192" fill="#02aba2"/>
<rect x="69" y="192" fill="#16b1a3"/>
<rect x="72" y="192" fill="#37bba8"/>
<rect x="75" y="192" fill="#62c8af"/>
<rect x="78" y="192" fill="#8dd4b6"/>
<rect x="81" y="192" fill="#b5e2ba"/>
<rect x="84" y="192" fill="#d8eecf"/>
<rect x="87" y="192" fill="#fdfcea"/>
<rect x="90" y="192" fill="#fffceb"/>
<rect x="93" y="192" fill="#fef2d3"/>
<rect x="96" y="192" fill="#fde7bf"/>
<rect x="99" y="192" fill="#fcdaa7"/>
<rect x="102" y="192" fill="#fbcc93"/>
<rect x="105" y="192" fill="#f9c184"/>
<rect x="108" y="192" fill="#f8b674"/>
<rect x="111" y="192" fill="#f7ab65"/>
<rect x="114" y="192" fill="#f69f57"/>
<rect x="117" y="192" fill="#f59449"/>
<rect x="120" y="192" fill="#f48a3c"/>
<rect x="123" y="192" fill="#f38030"/>
<rect x="126" y="192" fill="#f27725"/>
<rect x="129" y="192" fill="#f1701c"/>
<rect x="132" y="192" fill="#f06915"/>
<rect x="135" y="192" fill="#f0640f"/>
<rect x="138" y="192" fill="#ef5f0b"/>
<rect x="141" y="192" fill="#ef5d09"/>
<rect x="144" y="192" fill="#ef5b09"/>
<rect x="147" y="192" fill="#ee5a09"/>
<rect x="150" y="192" fill="#ee5909"/>
<rect x="153" y="192" fill="#ee5809"/>
<rect x="156" y="192" fill="#ee580a"/>
<rect x="159" y="192" fill="#ee570a"/>
<rect x="21" y="195" fill="#00acbd"/>
<rect x="24" y="195" fill="#00acbc"/>
<rect x="27" y="195" fill="#00acbc"/>
<rect x="30" y="195" fill="#00acbc"/>
<rect x="33" y="195" fill="#00acbb"/>
<rect x="36" y="195" fill="#00acbb"/>
<rect x="39" y="195" fill="#00acba"/>
<rect x="42" y="195" fill="#00acba"/>
<rect x="45" y="195" fill="#00acb9"/>
<rect x="48" y="195" fill="#00acb8"/>
<rect x="51" y="195" fill="#00acb7"/>
<rect x="54" y="195" fill="#00acb6"/>
<rect x="57" y="195" fill="#00abb5"/>
<rect x="60" y="195" fill="#00abb3"/>
<rect x="63" y="195" fill="#00abb1"/>
<rect x="66" y="195" fill="#09aeb1"/>
<rect x="69" y="195" fill="#27b8b7"/>
<rect x="72" y="195" fill="#55c6c1"/>
<rect x="75" y="195" fill="#89d7cf"/>
<rect x="78" y="195" fill="#bbe7dd"/>
<rect x="81" y="195" fill="#e1f4e8"/>
<rect x="84" y="195" fill="#f6fbf2"/>
<rect x="87" y="195" fill="#fffefa"/>
<rect x="90" y="195" fill="#fff9ec"/>
<rect x="93" y="195" fill="#feefda"/>
<rect x="96" y="195" fill="#fde4c8"/>
<rect x="99" y="195" fill="#fcdab9"/>
<rect x="102" y="195" fill="#facfa9"/>
<rect x="105" y="195" fill="#f9c298"/>
<rect x="108" y="195" fill="#f8b688"/>
<rect x="111" y="195" fill="#f7aa77"/>
<rect x="114" y="195" fill="#f59e67"/>
<rect x="117" y="195" fill="#f49358"/>
<rect x="120" y="195" fill="#f3884a"/>
<rect x="123" y="195" fill="#f27d3d"/>
<rect x="126" y="195" fill="#f17431"/>
<rect x="129" y="195" fill="#f06b27"/>
<rect x="132" y="195" fill="#ef641e"/>
<rect x="135" y="195" fill="#ee5e16"/>
<rect x="138" y="195" fill="#ee5911"/>
<rect x="141" y="195" fill="#ed550d"/>
<rect x="144" y="195" fill="#ed530b"/>
<rect x="147" y="195" fill="#ed520b"/>
<rect x="150" y="195" fill="#ed510c"/>
<rect x="153" y="195" fill="#ed510c"/>
<rect x="156" y="195" fill="#ed500c"/>
<rect x="159" y="195" fill="#ed500c"/>
<rect x="162" y="195" fill="#ed4f0c"/>
<rect x="21" y="198" fill="#00acc0"/>
<rect x="24" y="198" fill="#00acc0"/>
<rect x="27" y="198" fill="#00acc0"/>
<rect x="30" y="198" fill="#00acbf"/>
<rect x="33" y="198" fill="#00acbf"/>
<rect x="36" y="198" fill="#00acbf"/>
<rect x="39" y="198" fill="#00acbf"/>
<rect x="42" y="198" fill="#00acbf"/>
<rect x="45" y="198" fill="#00acbf"/>
<rect x="48" y="198" fill="#00acbe"/>
<rect x="51" y="198" fill="#00acbe"/>
<rect x="54" y="198" fill="#00acbe"/>
<rect x="57" y="198" fill="#00acbd"/>
<rect x="60" y="198" fill="#00acbc"/>
<rect x="63" y="198" fill="#00acbb"/>
<rect x="66" y="198" fill="#10b1be"/>
<rect x="69" y="198" fill="#35bdc7"/>
<rect x="72" y="198" fill="#69ced4"/>
<rect x="75" y="198" fill="#a5e1e3"/>
<rect x="78" y="198" fill="#ddf4f3"/>
<rect x="81" y="198" fill="#ffffff"/>
<rect x="84" y="198" fill="#ffffff"/>
<rect x="87" y="198" fill="#fffefd"/>
<rect x="90" y="198" fill="#fef9f4"/>
<rect x="93" y="198" fill="#fef1e7"/>
<rect x="96" y="198" fill="#fde7d9"/>
<rect x="99" y="198" fill="#fbdbc9"/>
<rect x="102" y="198" fill="#facfb9"/>
<rect x="105" y="198" fill="#f9c3a8"/>
<rect x="108" y="198" fill="#f7b697"/>
<rect x="111" y="198" fill="#f6a987"/>
<rect x="114" y="198" fill="#f59c76"/>
<rect x="117" y="198" fill="#f39067"/>
<rect x="120" y="198" fill="#f28458"/>
<rect x="123" y="198" fill="#f1794a"/>
<rect x="126" y="198" fill="#f06f3d"/>
<rect x="129" y="198" fill="#ef6531"/>
<rect x="132" y="198" fill="#ee5d27"/>
<rect x="135" y="198" fill="#ed561f"/>
<rect x="138" y="198" fill="#ec5018"/>
<rect x="141" y="198" fill="#ec4c13"/>
<rect x="144" y="198" fill="#eb4910"/>
<rect x="147" y="198" fill="#eb480f"/>
<rect x="150" y="198" fill="#eb470f"/>
<rect x="153" y="198" fill="#eb470f"/>
<rect x="156" y="198" fill="#eb470f"/>
<rect x="159" y="198" fill="#eb460f"/>
<rect x="162" y="198" fill="#eb460f"/>
<rect x="165" y="198" fill="#eb460f"/>
<rect x="21" y="201" fill="#00abc2"/>
<rect x="24" y="201" fill="#00abc3"/>
<rect x="27" y="201" fill="#00abc3"/>
<rect x="30" y="201" fill="#00abc3"/>
<rect x="33" y="201" fill="#00abc3"/>
<rect x="36" y="201" fill="#00abc3"/>
<rect x="39" y="201" fill="#00abc3"/>
<rect x="42" y="201" fill="#00abc3"/>
<rect x="45" y="201" fill="#00abc3"/>
<rect x="48" y="201" fill="#00abc3"/>
<rect x="51" y="201" fill="#00abc3"/>
<rect x="54" y="201" fill="#00abc3"/>
<rect x="57" y="201" fill="#00abc4"/>
<rect x="60" y="201" fill="#00abc4"/>
<rect x="63" y="201" fill="#03abc5"/>
<rect x="66" y="201" fill="#1ab3cb"/>
<rect x="69" y="201" fill="#44c1d5"/>
<rect x="72" y="201" fill="#7bd3e2"/>
<rect x="75" y="201" fill="#b6e7ef"/>
<rect x="78" y="201" fill="#e9f8fb"/>
<rect x="81" y="201" fill="#ffffff"/>
<rect x="84" y="201" fill="#ffffff"/>
<rect x="87" y="201" fill="#fffefe"/>
<rect x="90" y="201" fill="#fef9f8"/>
<rect x="93" y="201" fill="#fdf0ee"/>
<rect x="96" y="201" fill="#fce5e1"/>
<rect x="99" y="201" fill="#fbd9d2"/>
<rect x="102" y="201" fill="#f9ccc2"/>
<rect x="105" y="201" fill="#f8bfb2"/>
<rect x="108" y="201" fill="#f6b1a1"/>
<rect x="111" y="201" fill="#f5a491"/>
<rect x="114" y="201" fill="#f39780"/>
<rect x="117" y="201" fill="#f28a70"/>
<rect x="120" y="201" fill="#f17e61"/>
<rect x="123" y="201" fill="#ef7253"/>
<rect x="126" y="201" fill="#ee6845"/>
<rect x="129" y="201" fill="#ed5e39"/>
<rect x="132" y="201" fill="#ec562e"/>
<rect x="135" y="201" fill="#eb4e25"/>
<rect x="138" y="201" fill="#eb481d"/>
<rect x="141" y="201" fill="#ea4417"/>
<rect x="144" y="201" fill="#ea4113"/>
<rect x="147" y="201" fill="#ea3f11"/>
<rect x="150" y="201" fill="#ea3f11"/>
<rect x="153" y="201" fill="#ea3f11"/>
<rect x="156" y="201" fill="#ea3f11"/>
<rect x="159" y="201" fill="#ea3f11"/>
<rect x="162" y="201" fill="#ea3f11"/>
<rect x="165" y="201" fill="#ea3f11"/>
<rect x="168" y="201" fill="#ea3f11"/>
<rect x="21" y="204" fill="#00aac5"/>
<rect x="24" y="204" fill="#00aac6"/>
<rect x="27" y="204" fill="#00aac6"/>
<rect x="30" y="204" fill="#00aac6"/>
<rect x="33" y="204" fill="#00aac6"/>
<rect x="36" y="204" fill="#00aac6"/>
<rect x="39" y="204" fill="#00aac7"/>
<rect x="42" y="204" fill="#00aac7"/>
<rect x="45" y="204" fill="#00aac8"/>
<rect x="48" y="204" fill="#00aac8"/>
<rect x="51" y="204" fill="#00aac9"/>
<rect x="54" y="204" fill="#00a9c9"/>
<rect x="57" y="204" fill="#00a9ca"/>
<rect x="60" y="204" fill="#00a9cb"/>
<rect x="63" y="204" fill="#0eadd0"/>
<rect x="66" y="204" fill="#2fb8d8"/>
<rect x="69" y="204" fill="#5cc7e2"/>
<rect x="72" y="204" fill="#90d8ed"/>
<rect x="75" y="204" fill="#c2e9f6"/>
<rect x="78" y="204" fill="#ecf7fc"/>
<rect x="81" y="204" fill="#fbfcfe"/>
<rect x="84" y="204" fill="#fffefe"/>
<rect x="87" y="204" fill="#fffcfd"/>
<rect x="90" y="204" fill="#fef6f8"/>
<rect x="93" y="204" fill="#fdedf0"/>
<rect x="96" y="204" fill="#fce2e4"/>
<rect x="99" y="204" fill="#fad5d5"/>
<rect x="102" y="204" fill="#f9c8c4"/>
<rect x="105" y="204" fill="#f7bbb2"/>
<rect x="108" y="204" fill="#f6ada2"/>
<rect x="111" y="204" fill="#f49f91"/>
<rect x="114" y="204" fill="#f29281"/>
<rect x="117" y="204" fill="#f18472"/>
<rect x="120" y="204" fill="#f07763"/>
<rect x="123" y="204" fill="#ee6b54"/>
<rect x="126" y="204" fill="#ed6047"/>
<rect x="129" y="204" fill="#ec563b"/>
<rect x="132" y="204" fill="#eb4d31"/>
<rect x="135" y="204" fill="#ea4528"/>
<rect x="138" y="204" fill="#e93e20"/>
<rect x="141" y="204" fill="#e9391a"/>
<rect x="144" y="204" fill="#e83616"/>
<rect x="147" y="204" fill="#e83514"/>
<rect x="150" y="204" fill="#e83514"/>
<rect x="153" y="204" fill="#e83613"/>
<rect x="156" y="204" fill="#e83713"/>
<rect x="159" y="204" fill="#e93713"/>
<rect x="162" y="204" fill="#e93813"/>
<rect x="165" y="204" fill="#e93813"/>
<rect x="168" y="204" fill="#e93813"/>
<rect x="24" y="207" fill="#00aac8"/>
<rect x="27" y="207" fill="#00aac9"/>
<rect x="30" y="207" fill="#00a9c9"/>
<rect x="33" y="207" fill="#00a9ca"/>
<rect x="36" y="207" fill="#00a9ca"/>
<rect x="39" y="207" fill="#00a9cb"/>
<rect x="42" y="207" fill="#00a9cb"/>
<rect x="45" y="207" fill="#00a9cc"/>
<rect x="48" y="207" fill="#00a9cd"/>
<rect x="51" y="207" fill="#00a8ce"/>
<rect x="54" y="207" fill="#00a8d0"/>
<rect x="57" y="207" fill="#00a8d1"/>
<rect x="60" y="207" fill="#03a8d4"/>
<rect x="63" y="207" fill="#17afda"/>
<rect x="66" y="207" fill="#3abae1"/>
<rect x="69" y="207" fill="#67c7e8"/>
<rect x="72" y="207" fill="#9dd9f0"/>
<rect x="75" y="207" fill="#c9e8f6"/>
<rect x="78" y="207" fill="#e1eff9"/>
<rect x="81" y="207" fill="#f0f0f7"/>
<rect x="84" y="207" fill="#fdf4fa"/>
<rect x="87" y="207" fill="#fef4f9"/>
<rect x="90" y="207" fill="#fdeff5"/>
<rect x="93" y="207" fill="#fce7ef"/>
<rect x="96" y="207" fill="#fbdde6"/>
<rect x="99" y="207" fill="#fad1d9"/>
<rect x="102" y="207" fill="#f9c3cb"/>
<rect x="105" y="207" fill="#f7b5bc"/>
<rect x="108" y="207" fill="#f5a8aa"/>
<rect x="111" y="207" fill="#f49a98"/>
<rect x="114" y="207" fill="#f28c86"/>
<rect x="117" y="207" fill="#f07f74"/>
<rect x="120" y="207" fill="#ef7462"/>
<rect x="123" y="207" fill="#ee6954"/>
<rect x="126" y="207" fill="#ec5e47"/>
<rect x="129" y="207" fill="#eb543b"/>
<rect x="132" y="207" fill="#ea4b31"/>
<rect x="135" y="207" fill="#ea4428"/>
<rect x="138" y="207" fill="#e93d20"/>
<rect x="141" y="207" fill="#e8391a"/>
<rect x="144" y="207" fill="#e83516"/>
<rect x="147" y="207" fill="#e83414"/>
<rect x="150" y="207" fill="#e83314"/>
<rect x="153" y="207" fill="#e83414"/>
<rect x="156" y="207" fill="#e83414"/>
<rect x="159" y="207" fill="#e83414"/>
<rect x="162" y="207" fill="#e83414"/>
<rect x="165" y="207" fill="#e83414"/>
<rect x="168" y="207" fill="#e83414"/>
<rect x="171" y="207" fill="#e83414"/>
<rect x="24" y="210" fill="#00a9cb"/>
<rect x="27" y="210" fill="#00a9cc"/>
<rect x="30" y="210" fill="#00a9cd"/>
<rect x="33" y="210" fill="#00a8cd"/>
<rect x="36" y="210" fill="#00a8ce"/>
<rect x="39" y="210" fill="#00a8cf"/>
<rect x="42" y="210" fill="#00a8d0"/>
<rect x="45" y="210" fill="#00a8d1"/>
<rect x="48" y="210" fill="#00a7d2"/>
<rect x="51" y="210" fill="#00a7d4"/>
<rect x="54" y="210" fill="#00a7d6"/>
<rect x="57" y="210" fill="#00a6d8"/>
<rect x="60" y="210" fill="#06a6d9"/>
<rect x="63" y="210" fill="#1facdc"/>
<rect x="66" y="210" fill="#49b9e3"/>
<rect x="69" y="210" fill="#78c8ea"/>
<rect x="72" y="210" fill="#a3d7f0"/>
<rect x="75" y="210" fill="#bedef2"/>
<rect x="78" y="210" fill="#cedef1"/>
<rect x="81" y="210" fill="#e9e0ef"/>
<rect x="84" y="210" fill="#f9e6f2"/>
<rect x="87" y="210" fill="#fce7f3"/>
<rect x="90" y="210" fill="#fce5f0"/>
<rect x="93" y="210" fill="#fbddeb"/>
<rect x="96" y="210" fill="#fad5e3"/>
<rect x="99" y="210" fill="#f9cada"/>
<rect x="102" y="210" fill="#f8bece"/>
<rect x="105" y="210" fill="#f7b1c0"/>
<rect x="108" y="210" fill="#f5a3b1"/>
<rect x="111" y="210" fill="#f495a2"/>
<rect x="114" y="210" fill="#f28792"/>
<rect x="117" y="210" fill="#f17a81"/>
<rect x="120" y="210" fill="#ef6e70"/>
<rect x="123" y="210" fill="#ed6260"/>
<rect x="126" y="210" fill="#ec5850"/>
<rect x="129" y="210" fill="#ea4e42"/>
<rect x="132" y="210" fill="#e94634"/>
<rect x="135" y="210" fill="#e83f28"/>
<rect x="138" y="210" fill="#e83b20"/>
<rect x="141" y="210" fill="#e8371a"/>
<rect x="144" y="210" fill="#e83417"/>
<rect x="147" y="210" fill="#e73215"/>
<rect x="150" y="210" fill="#e83314"/>
<rect x="153" y="210" fill="#e83314"/>
<rect x="156" y="210" fill="#e83314"/>
<rect x="159" y="210" fill="#e83314"/>
<rect x="162" y="210" fill="#e83314"/>
<rect x="165" y="210" fill="#e83314"/>
<rect x="168" y="210" fill="#e83314"/>
<rect x="171" y="210" fill="#e83314"/>
<rect x="174" y="210" fill="#e83314"/>
<rect x="24" y="213" fill="#00a8ce"/>
<rect x="27" y="213" fill="#00a8cf"/>
<rect x="30" y="213" fill="#00a8d0"/>
<rect x="33" y="213" fill="#00a8d1"/>
<rect x="36" y="213" fill="#00a7d2"/>
<rect x="39" y="213" fill="#00a7d3"/>
<rect x="42" y="213" fill="#00a7d4"/>
<rect x="45" y="213" fill="#00a7d6"/>
<rect x="48" y="213" fill="#00a6d7"/>
<rect x="51" y="213" fill="#00a5d8"/>
<rect x="54" y="213" fill="#00a3d8"/>
<rect x="57" y="213" fill="#00a1d8"/>
<rect x="60" y="213" fill="#0ea4da"/>
<rect x="63" y="213" fill="#2dacde"/>
<rect x="66" y="213" fill="#54b8e4"/>
<rect x="69" y="213" fill="#7bc5ea"/>
<rect x="72" y="213" fill="#97cceb"/>
<rect x="75" y="213" fill="#a9ccea"/>
<rect x="78" y="213" fill="#bec7e4"/>
<rect x="81" y="213" fill="#e2cee7"/>
<rect x="84" y="213" fill="#f4d4ea"/>
<rect x="87" y="213" fill="#f9d7ea"/>
<rect x="90" y="213" fill="#fad7e9"/>
<rect x="93" y="213" fill="#fad2e6"/>
<rect x="96" y="213" fill="#f9cade"/>
<rect x="99" y="213" fill="#f8c0d6"/>
<rect x="102" y="213" fill="#f7b6cc"/>
<rect x="105" y="213" fill="#f6aac2"/>
<rect x="108" y="213" fill="#f59db5"/>
<rect x="111" y="213" fill="#f390a7"/>
<rect x="114" y="213" fill="#f28398"/>
<rect x="117" y="213" fill="#f07689"/>
<rect x="120" y="213" fill="#ef697b"/>
<rect x="123" y="213" fill="#ee5d6c"/>
<rect x="126" y="213" fill="#ec535e"/>
<rect x="129" y="213" fill="#eb4a50"/>
<rect x="132" y="213" fill="#ea4143"/>
<rect x="135" y="213" fill="#e93a38"/>
<rect x="138" y="213" fill="#e8352d"/>
<rect x="141" y="213" fill="#e73125"/>
<rect x="144" y="213" fill="#e72e1e"/>
<rect x="147" y="213" fill="#e62e19"/>
<rect x="150" y="213" fill="#e62e16"/>
<rect x="153" y="213" fill="#e73015"/>
<rect x="156" y="213" fill="#e73115"/>
<rect x="159" y="213" fill="#e73215"/>
<rect x="162" y="213" fill="#e73215"/>
<rect x="165" y="213" fill="#e73215"/>
<rect x="168" y="213" fill="#e73215"/>
<rect x="171" y="213" fill="#e83314"/>
<rect x="174" y="213" fill="#e83314"/>
<rect x="177" y="213" fill="#e83314"/>
<rect x="24" y="216" fill="#00a8d1"/>
<rect x="27" y="216" fill="#00a7d2"/>
<rect x="30" y="216" fill="#00a7d3"/>
<rect x="33" y="216" fill="#00a7d4"/>
<rect x="36" y="216" fill="#00a7d5"/>
<rect x="39" y="216" fill="#00a6d7"/>
<rect x="42" y="216" fill="#00a6d8"/>
<rect x="45" y="216" fill="#00a4d8"/>
<rect x="48" y="216" fill="#00a3d8"/>
<rect x="51" y="216" fill="#00a1d8"/>
<rect x="54" y="216" fill="#009fd7"/>
<rect x="57" y="216" fill="#039dd8"/>
<rect x="60" y="216" fill="#16a1da"/>
<rect x="63" y="216" fill="#34a9df"/>
<rect x="66" y="216" fill="#56b4e4"/>
<rect x="69" y="216" fill="#71b9e4"/>
<rect x="72" y="216" fill="#82b9e3"/>
<rect x="75" y="216" fill="#94b5de"/>
<rect x="78" y="216" fill="#b4b0d7"/>
<rect x="81" y="216" fill="#dbbcde"/>
<rect x="84" y="216" fill="#efc1e0"/>
<rect x="87" y="216" fill="#f6c5e1"/>
<rect x="90" y="216" fill="#f7c7e1"/>
<rect x="93" y="216" fill="#f8c4df"/>
<rect x="96" y="216" fill="#f8bdd9"/>
<rect x="99" y="216" fill="#f7b5d1"/>
<rect x="102" y="216" fill="#f6abc9"/>
<rect x="105" y="216" fill="#f5a0bf"/>
<rect x="108" y="216" fill="#f495b5"/>
<rect x="111" y="216" fill="#f28aaa"/>
<rect x="114" y="216" fill="#f17e9c"/>
<rect x="117" y="216" fill="#f0718f"/>
<rect x="120" y="216" fill="#ef6581"/>
<rect x="123" y="216" fill="#ed5a74"/>
<rect x="126" y="216" fill="#ec4f67"/>
<rect x="129" y="216" fill="#eb465b"/>
<rect x="132" y="216" fill="#ea3d50"/>
<rect x="135" y="216" fill="#e93745"/>
<rect x="138" y="216" fill="#e9313b"/>
<rect x="141" y="216" fill="#e82e33"/>
<rect x="144" y="216" fill="#e72c2d"/>
<rect x="147" y="216" fill="#e72b28"/>
<rect x="150" y="216" fill="#e72c25"/>
<rect x="153" y="216" fill="#e72c21"/>
<rect x="156" y="216" fill="#e62d1e"/>
<rect x="159" y="216" fill="#e62d1c"/>
<rect x="162" y="216" fill="#e62d19"/>
<rect x="165" y="216" fill="#e62e17"/>
<rect x="168" y="216" fill="#e73015"/>
<rect x="171" y="216" fill="#e73115"/>
<rect x="174" y="216" fill="#e73115"/>
<rect x="177" y="216" fill="#e73215"/>
<rect x="24" y="219" fill="#00a7d4"/>
<rect x="27" y="219" fill="#00a7d5"/>
<rect x="30" y="219" fill="#00a6d7"/>
<rect x="33" y="219" fill="#00a6d8"/>
<rect x="36" y="219" fill="#00a5d8"/>
<rect x="39" y="219" fill="#00a4d8"/>
<rect x="42" y="219" fill="#00a2d8"/>
<rect x="45" y="219" fill="#00a1d8"/>
<rect x="48" y="219" fill="#009fd7"/>
<rect x="51" y="219" fill="#009dd7"/>
<rect x="54" y="219" fill="#009ad7"/>
<rect x="57" y="219" fill="#0799d8"/>
<rect x="60" y="219" fill="#1a9edb"/>
<rect x="63" y="219" fill="#36a5de"/>
<rect x="66" y="219" fill="#4da9de"/>
<rect x="69" y="219" fill="#5da8dc"/>
<rect x="72" y="219" fill="#6da4d8"/>
<rect x="75" y="219" fill="#849bcf"/>
<rect x="78" y="219" fill="#b09bcb"/>
<rect x="81" y="219" fill="#d6a8d5"/>
<rect x="84" y="219" fill="#e9aed7"/>
<rect x="87" y="219" fill="#f3b2d8"/>
<rect x="90" y="219" fill="#f5b5d8"/>
<rect x="93" y="219" fill="#f6b4d7"/>
<rect x="96" y="219" fill="#f6afd3"/>
<rect x="99" y="219" fill="#f5a8cd"/>
<rect x="102" y="219" fill="#f49fc4"/>
<rect x="105" y="219" fill="#f396bb"/>
<rect x="108" y="219" fill="#f28cb2"/>
<rect x="111" y="219" fill="#f181a8"/>
<rect x="114" y="219" fill="#f0779e"/>
<rect x="117" y="219" fill="#ef6c92"/>
<rect x="120" y="219" fill="#ee6186"/>
<rect x="123" y="219" fill="#ed5679"/>
<rect x="126" y="219" fill="#ec4c6d"/>
<rect x="129" y="219" fill="#eb4362"/>
<rect x="132" y="219" fill="#ea3b58"/>
<rect x="135" y="219" fill="#e9344e"/>
<rect x="138" y="219" fill="#e92f46"/>
<rect x="141" y="219" fill="#e82b3f"/>
<rect x="144" y="219" fill="#e82939"/>
<rect x="147" y="219" fill="#e82935"/>
<rect x="150" y="219" fill="#e82931"/>
<rect x="153" y="219" fill="#e72a2e"/>
<rect x="156" y="219" fill="#e72b2b"/>
<rect x="159" y="219" fill="#e72b28"/>
<rect x="162" y="219" fill="#e72b25"/>
<rect x="165" y="219" fill="#e72c22"/>
<rect x="168" y="219" fill="#e72c20"/>
<rect x="171" y="219" fill="#e62d1d"/>
<rect x="174" y="219" fill="#e62d1b"/>
<rect x="177" y="219" fill="#e62e19"/>
<rect x="180" y="219" fill="#e62e17"/>
<rect x="24" y="222" fill="#00a6d7"/>
<rect x="27" y="222" fill="#00a6d8"/>
<rect x="30" y="222" fill="#00a5d8"/>
<rect x="33" y="222" fill="#00a3d8"/>
<rect x="36" y="222" fill="#00a2d8"/>
<rect x="39" y="222" fill="#00a1d8"/>
<rect x="42" y="222" fill="#009fd7"/>
<rect x="45" y="222" fill="#009dd7"/>
<rect x="48" y="222" fill="#009bd7"/>
<rect x="51" y="222" fill="#0099d7"/>
<rect x="54" y="222" fill="#0095d7"/>
<rect x="57" y="222" fill="#0995d8"/>
<rect x="60" y="222" fill="#1c98d9"/>
<rect x="63" y="222" fill="#2e9ad9"/>
<rect x="66" y="222" fill="#3b98d7"/>
<rect x="69" y="222" fill="#4994d3"/>
<rect x="72" y="222" fill="#5b8ccc"/>
<rect x="75" y="222" fill="#7783c1"/>
<rect x="78" y="222" fill="#aa89c3"/>
<rect x="81" y="222" fill="#d096cb"/>
<rect x="84" y="222" fill="#e49bcd"/>
<rect x="87" y="222" fill="#ee9fce"/>
<rect x="90" y="222" fill="#f2a2ce"/>
<rect x="93" y="222" fill="#f3a3ce"/>
<rect x="96" y="222" fill="#f3a1cc"/>
<rect x="99" y="222" fill="#f39ac7"/>
<rect x="102" y="222" fill="#f393c0"/>
<rect x="105" y="222" fill="#f28ab7"/>
<rect x="108" y="222" fill="#f181af"/>
<rect x="111" y="222" fill="#f077a5"/>
<rect x="114" y="222" fill="#ef6e9c"/>
<rect x="117" y="222" fill="#ee6492"/>
<rect x="120" y="222" fill="#ed5b89"/>
<rect x="123" y="222" fill="#ec527e"/>
<rect x="126" y="222" fill="#eb4873"/>
<rect x="129" y="222" fill="#eb4068"/>
<rect x="132" y="222" fill="#ea395f"/>
<rect x="135" y="222" fill="#e93356"/>
<rect x="138" y="222" fill="#e92e4e"/>
<rect x="141" y="222" fill="#e82a48"/>
<rect x="144" y="222" fill="#e82843"/>
<rect x="147" y="222" fill="#e8283f"/>
<rect x="150" y="222" fill="#e8283c"/>
<rect x="153" y="222" fill="#e8283a"/>
<rect x="156" y="222" fill="#e82936"/>
<rect x="159" y="222" fill="#e82933"/>
<rect x="162" y="222" fill="#e72a30"/>
<rect x="165" y="222" fill="#e72a2d"/>
<rect x="168" y="222" fill="#e72b2a"/>
<rect x="171" y="222" fill="#e72b28"/>
<rect x="174" y="222" fill="#e72b25"/>
<rect x="177" y="222" fill="#e72c23"/>
<rect x="27" y="225" fill="#00a3d8"/>
<rect x="30" y="225" fill="#00a2d8"/>
<rect x="33" y="225" fill="#00a1d8"/>
<rect x="36" y="225" fill="#009fd7"/>
<rect x="39" y="225" fill="#009ed7"/>
<rect x="42" y="225" fill="#009cd7"/>
<rect x="45" y="225" fill="#009ad7"/>
<rect x="48" y="225" fill="#0097d7"/>
<rect x="51" y="225" fill="#0094d7"/>
<rect x="54" y="225" fill="#0091d6"/>
<rect x="57" y="225" fill="#0a90d6"/>
<rect x="60" y="225" fill="#168fd5"/>
<rect x="63" y="225" fill="#208cd2"/>
<rect x="66" y="225" fill="#2b87ce"/>
<rect x="69" y="225" fill="#397fc8"/>
<rect x="72" y="225" fill="#4f72bc"/>
<rect x="75" y="225" fill="#756db4"/>
<rect x="78" y="225" fill="#a578bb"/>
<rect x="81" y="225" fill="#cc83c3"/>
<rect x="84" y="225" fill="#de88c4"/>
<rect x="87" y="225" fill="#ea8cc4"/>
<rect x="90" y="225" fill="#ef90c5"/>
<rect x="93" y="225" fill="#f091c5"/>
<rect x="96" y="225" fill="#f190c3"/>
<rect x="99" y="225" fill="#f18cc0"/>
<rect x="102" y="225" fill="#f186bb"/>
<rect x="105" y="225" fill="#f17eb3"/>
<rect x="108" y="225" fill="#f076ab"/>
<rect x="111" y="225" fill="#ef6ea2"/>
<rect x="114" y="225" fill="#ee659a"/>
<rect x="117" y="225" fill="#ed5c91"/>
<rect x="120" y="225" fill="#ec5488"/>
<rect x="123" y="225" fill="#ec4c80"/>
<rect x="126" y="225" fill="#eb4477"/>
<rect x="129" y="225" fill="#ea3d6e"/>
<rect x="132" y="225" fill="#ea3665"/>
<rect x="135" y="225" fill="#e9315c"/>
<rect x="138" y="225" fill="#e82c55"/>
<rect x="141" y="225" fill="#e8294f"/>
<rect x="144" y="225" fill="#e8284b"/>
<rect x="147" y="225" fill="#e82848"/>
<rect x="150" y="225" fill="#e82845"/>
<rect x="153" y="225" fill="#e82842"/>
<rect x="156" y="225" fill="#e8283f"/>
<rect x="159" y="225" fill="#e8283c"/>
<rect x="162" y="225" fill="#e8283a"/>
<rect x="165" y="225" fill="#e82837"/>
<rect x="168" y="225" fill="#e82934"/>
<rect x="171" y="225" fill="#e82931"/>
<rect x="27" y="228" fill="#00a1d8"/>
<rect x="30" y="228" fill="#00a0d7"/>
<rect x="33" y="228" fill="#009ed7"/>
<rect x="36" y="228" fill="#009dd7"/>
<rect x="39" y="228" fill="#009bd7"/>
<rect x="42" y="228" fill="#0099d7"/>
<rect x="45" y="228" fill="#0096d7"/>
<rect x="48" y="228" fill="#0093d6"/>
<rect x="51" y="228" fill="#0090d6"/>
<rect x="54" y="228" fill="#018bd5"/>
<rect x="57" y="228" fill="#0688d2"/>
<rect x="60" y="228" fill="#0c84cf"/>
<rect x="63" y="228" fill="#147ecb"/>
<rect x="66" y="228" fill="#1e76c6"/>
<rect x="69" y="228" fill="#2d6abd"/>
<rect x="72" y="228" fill="#465db0"/>
<rect x="75" y="228" fill="#785ba8"/>
<rect x="78" y="228" fill="#a168b4"/>
<rect x="81" y="228" fill="#c872bb"/>
<rect x="84" y="228" fill="#d976bb"/>
<rect x="87" y="228" fill="#e579bb"/>
<rect x="90" y="228" fill="#ec7ebc"/>
<rect x="93" y="228" fill="#ed80bc"/>
<rect x="96" y="228" fill="#ee80bb"/>
<rect x="99" y="228" fill="#ef7eb9"/>
<rect x="102" y="228" fill="#ef79b5"/>
<rect x="105" y="228" fill="#ef72af"/>
<rect x="108" y="228" fill="#ee6ba7"/>
<rect x="111" y="228" fill="#ee63a0"/>
<rect x="114" y="228" fill="#ed5c98"/>
<rect x="117" y="228" fill="#ec5490"/>
<rect x="120" y="228" fill="#ec4d88"/>
<rect x="123" y="228" fill="#eb4580"/>
<rect x="126" y="228" fill="#ea3f78"/>
<rect x="129" y="228" fill="#ea3971"/>
<rect x="132" y="228" fill="#e9336a"/>
<rect x="135" y="228" fill="#e92f62"/>
<rect x="138" y="228" fill="#e82b5c"/>
<rect x="141" y="228" fill="#e82957"/>
<rect x="144" y="228" fill="#e82853"/>
<rect x="147" y="228" fill="#e8284f"/>
<rect x="150" y="228" fill="#e8284c"/>
<rect x="153" y="228" fill="#e82849"/>
<rect x="156" y="228" fill="#e82846"/>
<rect x="159" y="228" fill="#e82844"/>
<rect x="162" y="228" fill="#e82841"/>
<rect x="165" y="228" fill="#e8283f"/>
<rect x="168" y="228" fill="#e8283d"/>
<rect x="27" y="231" fill="#009ed7"/>
<rect x="30" y="231" fill="#009dd7"/>
<rect x="33" y="231" fill="#009bd7"/>
<rect x="36" y="231" fill="#009ad7"/>
<rect x="39" y="231" fill="#0098d7"/>
<rect x="42" y="231" fill="#0095d7"/>
<rect x="45" y="231" fill="#0092d6"/>
<rect x="48" y="231" fill="#008fd6"/>
<rect x="51" y="231" fill="#008bd4"/>
<rect x="54" y="231" fill="#0085d1"/>
<rect x="57" y="231" fill="#027fce"/>
<rect x="60" y="231" fill="#0578c9"/>
<rect x="63" y="231" fill="#0b70c4"/>
<rect x="66" y="231" fill="#1565bc"/>
<rect x="69" y="231" fill="#2655af"/>
<rect x="72" y="231" fill="#414ba5"/>
<rect x="75" y="231" fill="#774ea3"/>
<rect x="78" y="231" fill="#9f5aad"/>
<rect x="81" y="231" fill="#c463b3"/>
<rect x="84" y="231" fill="#d466b3"/>
<rect x="87" y="231" fill="#e068b3"/>
<rect x="90" y="231" fill="#e96db4"/>
<rect x="93" y="231" fill="#eb6fb4"/>
<rect x="96" y="231" fill="#ec70b3"/>
<rect x="99" y="231" fill="#ed6fb1"/>
<rect x="102" y="231" fill="#ed6caf"/>
<rect x="105" y="231" fill="#ed66ab"/>
<rect x="108" y="231" fill="#ed60a4"/>
<rect x="111" y="231" fill="#ec5a9d"/>
<rect x="114" y="231" fill="#ec5395"/>
<rect x="117" y="231" fill="#eb4c8e"/>
<rect x="120" y="231" fill="#eb4687"/>
<rect x="123" y="231" fill="#ea3f80"/>
<rect x="126" y="231" fill="#ea3a79"/>
<rect x="129" y="231" fill="#e93573"/>
<rect x="132" y="231" fill="#e9306d"/>
<rect x="135" y="231" fill="#e82c68"/>
<rect x="138" y="231" fill="#e82a62"/>
<rect x="141" y="231" fill="#e8285d"/>
<rect x="144" y="231" fill="#e8285a"/>
<rect x="147" y="231" fill="#e82856"/>
<rect x="150" y="231" fill="#e82853"/>
<rect x="153" y="231" fill="#e82850"/>
<rect x="156" y="231" fill="#e8284d"/>
<rect x="159" y="231" fill="#e8284a"/>
<rect x="162" y="231" fill="#e82848"/>
<rect x="27" y="234" fill="#009cd7"/>
<rect x="30" y="234" fill="#009ad7"/>
<rect x="33" y="234" fill="#0099d7"/>
<rect x="36" y="234" fill="#0097d7"/>
<rect x="39" y="234" fill="#0094d7"/>
<rect x="42" y="234" fill="#0092d6"/>
<rect x="45" y="234" fill="#008fd6"/>
<rect x="48" y="234" fill="#008bd4"/>
<rect x="51" y="234" fill="#0086d1"/>
<rect x="54" y="234" fill="#0080ce"/>
<rect x="57" y="234" fill="#0078ca"/>
<rect x="60" y="234" fill="#016ec4"/>
<rect x="63" y="234" fill="#0663bd"/>
<rect x="66" y="234" fill="#1055b3"/>
<rect x="69" y="234" fill="#2245a5"/>
<rect x="72" y="234" fill="#483c9b"/>
<rect x="75" y="234" fill="#77439f"/>
<rect x="78" y="234" fill="#9e4da7"/>
<rect x="81" y="234" fill="#c155ad"/>
<rect x="84" y="234" fill="#d057ac"/>
<rect x="87" y="234" fill="#dc59ab"/>
<rect x="90" y="234" fill="#e65dac"/>
<rect x="93" y="234" fill="#e860ac"/>
<rect x="96" y="234" fill="#e961ab"/>
<rect x="99" y="234" fill="#ea61aa"/>
<rect x="102" y="234" fill="#eb5fa8"/>
<rect x="105" y="234" fill="#ec5ba5"/>
<rect x="108" y="234" fill="#ec56a1"/>
<rect x="111" y="234" fill="#eb509a"/>
<rect x="114" y="234" fill="#eb4a93"/>
<rect x="117" y="234" fill="#ea458d"/>
<rect x="120" y="234" fill="#ea3f86"/>
<rect x="123" y="234" fill="#e93a80"/>
<rect x="126" y="234" fill="#e9357a"/>
<rect x="129" y="234" fill="#e93174"/>
<rect x="132" y="234" fill="#e82d6f"/>
<rect x="135" y="234" fill="#e82b6a"/>
<rect x="138" y="234" fill="#e82967"/>
<rect x="141" y="234" fill="#e82863"/>
<rect x="144" y="234" fill="#e82860"/>
<rect x="147" y="234" fill="#e8285d"/>
<rect x="150" y="234" fill="#e82859"/>
<rect x="153" y="234" fill="#e82856"/>
<rect x="156" y="234" fill="#e82853"/>
<rect x="27" y="237" fill="#009ad7"/>
<rect x="30" y="237" fill="#0098d7"/>
<rect x="33" y="237" fill="#0096d7"/>
<rect x="36" y="237" fill="#0094d6"/>
<rect x="39" y="237" fill="#0091d6"/>
<rect x="42" y="237" fill="#008ed6"/>
<rect x="45" y="237" fill="#008ad4"/>
<rect x="48" y="237" fill="#0086d1"/>
<rect x="51" y="237" fill="#0080ce"/>
<rect x="54" y="237" fill="#007acb"/>
<rect x="57" y="237" fill="#0071c6"/>
<rect x="60" y="237" fill="#0266bf"/>
<rect x="63" y="237" fill="#0558b6"/>
<rect x="66" y="237" fill="#1046a9"/>
<rect x="69" y="237" fill="#23389d"/>
<rect x="72" y="237" fill="#533191"/>
<rect x="75" y="237" fill="#783a9c"/>
<rect x="78" y="237" fill="#9d43a2"/>
<rect x="81" y="237" fill="#bf4aa7"/>
<rect x="84" y="237" fill="#cc4ba6"/>
<rect x="87" y="237" fill="#d84ca5"/>
<rect x="90" y="237" fill="#e24fa5"/>
<rect x="93" y="237" fill="#e652a5"/>
<rect x="96" y="237" fill="#e753a5"/>
<rect x="99" y="237" fill="#e853a3"/>
<rect x="102" y="237" fill="#e953a2"/>
<rect x="105" y="237" fill="#ea51a0"/>
<rect x="108" y="237" fill="#ea4c9c"/>
<rect x="111" y="237" fill="#ea4798"/>
<rect x="114" y="237" fill="#ea4292"/>
<rect x="117" y="237" fill="#e93e8c"/>
<rect x="120" y="237" fill="#e93986"/>
<rect x="123" y="237" fill="#e93580"/>
<rect x="126" y="237" fill="#e8317a"/>
<rect x="129" y="237" fill="#e82e75"/>
<rect x="132" y="237" fill="#e82b71"/>
<rect x="135" y="237" fill="#e82a6d"/>
<rect x="138" y="237" fill="#e8296a"/>
<rect x="141" y="237" fill="#e82868"/>
<rect x="144" y="237" fill="#e82865"/>
<rect x="147" y="237" fill="#e82862"/>
<rect x="150" y="237" fill="#e8285f"/>
<rect x="153" y="237" fill="#e8285c"/>
<rect x="30" y="240" fill="#0095d7"/>
<rect x="33" y="240" fill="#0093d6"/>
<rect x="36" y="240" fill="#0091d6"/>
<rect x="39" y="240" fill="#008ed6"/>
<rect x="42" y="240" fill="#008ad4"/>
<rect x="45" y="240" fill="#0086d2"/>
<rect x="48" y="240" fill="#0081cf"/>
<rect x="51" y="240" fill="#007bcb"/>
<rect x="54" y="240" fill="#0073c7"/>
<rect x="57" y="240" fill="#016ac2"/>
<rect x="60" y="240" fill="#045fbb"/>
<rect x="63" y="240" fill="#094fb0"/>
<rect x="66" y="240" fill="#133da1"/>
<rect x="69" y="240" fill="#282f97"/>
<rect x="72" y="240" fill="#592d91"/>
<rect x="75" y="240" fill="#7a349a"/>
<rect x="78" y="240" fill="#9e3b9f"/>
<rect x="81" y="240" fill="#bd41a3"/>
<rect x="84" y="240" fill="#c941a1"/>
<rect x="87" y="240" fill="#d442a0"/>
<rect x="90" y="240" fill="#df44a0"/>
<rect x="93" y="240" fill="#e4469f"/>
<rect x="96" y="240" fill="#e5479f"/>
<rect x="99" y="240" fill="#e6489e"/>
<rect x="102" y="240" fill="#e7479c"/>
<rect x="105" y="240" fill="#e8469b"/>
<rect x="108" y="240" fill="#e94398"/>
<rect x="111" y="240" fill="#e93f95"/>
<rect x="114" y="240" fill="#e93c91"/>
<rect x="117" y="240" fill="#e9388b"/>
<rect x="120" y="240" fill="#e83486"/>
<rect x="123" y="240" fill="#e83180"/>
<rect x="126" y="240" fill="#e82e7c"/>
<rect x="129" y="240" fill="#e82c77"/>
<rect x="132" y="240" fill="#e82a74"/>
<rect x="135" y="240" fill="#e82970"/>
<rect x="138" y="240" fill="#e8296e"/>
<rect x="141" y="240" fill="#e8296b"/>
<rect x="144" y="240" fill="#e82969"/>
<rect x="147" y="240" fill="#e82867"/>
<rect x="30" y="243" fill="#0093d6"/>
<rect x="33" y="243" fill="#0090d6"/>
<rect x="36" y="243" fill="#008ed6"/>
<rect x="39" y="243" fill="#008ad4"/>
<rect x="42" y="243" fill="#0086d2"/>
<rect x="45" y="243" fill="#0082cf"/>
<rect x="48" y="243" fill="#007ccc"/>
<rect x="51" y="243" fill="#0075c8"/>
<rect x="54" y="243" fill="#006dc3"/>
<rect x="57" y="243" fill="#0264be"/>
<rect x="60" y="243" fill="#0556b5"/>
<rect x="63" y="243" fill="#0d46a9"/>
<rect x="66" y="243" fill="#1a369d"/>
<rect x="69" y="243" fill="#392b92"/>
<rect x="72" y="243" fill="#602c92"/>
<rect x="75" y="243" fill="#7e3199"/>
<rect x="78" y="243" fill="#9f369d"/>
<rect x="81" y="243" fill="#bb3a9f"/>
<rect x="84" y="243" fill="#c73a9e"/>
<rect x="87" y="243" fill="#d23a9c"/>
<rect x="90" y="243" fill="#dc3c9c"/>
<rect x="93" y="243" fill="#e23d9b"/>
<rect x="96" y="243" fill="#e33e9a"/>
<rect x="99" y="243" fill="#e53e99"/>
<rect x="102" y="243" fill="#e63e98"/>
<rect x="105" y="243" fill="#e63d96"/>
<rect x="108" y="243" fill="#e73c95"/>
<rect x="111" y="243" fill="#e83992"/>
<rect x="114" y="243" fill="#e83690"/>
<rect x="117" y="243" fill="#e8338b"/>
<rect x="120" y="243" fill="#e83086"/>
<rect x="123" y="243" fill="#e82e81"/>
<rect x="126" y="243" fill="#e72c7d"/>
<rect x="129" y="243" fill="#e72b7a"/>
<rect x="132" y="243" fill="#e82a77"/>
<rect x="135" y="243" fill="#e82a74"/>
<rect x="138" y="243" fill="#e82971"/>
<rect x="141" y="243" fill="#e8296f"/>
<rect x="30" y="246" fill="#0090d6"/>
<rect x="33" y="246" fill="#008dd6"/>
<rect x="36" y="246" fill="#008ad4"/>
<rect x="39" y="246" fill="#0086d2"/>
<rect x="42" y="246" fill="#0082cf"/>
<rect x="45" y="246" fill="#007dcd"/>
<rect x="48" y="246" fill="#0077c9"/>
<rect x="51" y="246" fill="#006fc5"/>
<rect x="54" y="246" fill="#0267c0"/>
<rect x="57" y="246" fill="#045db9"/>
<rect x="60" y="246" fill="#094fb0"/>
<rect x="63" y="246" fill="#123ea3"/>
<rect x="66" y="246" fill="#213299"/>
<rect x="69" y="246" fill="#4a288c"/>
<rect x="72" y="246" fill="#672d93"/>
<rect x="75" y="246" fill="#843199"/>
<rect x="78" y="246" fill="#a2359c"/>
<rect x="81" y="246" fill="#bb379e"/>
<rect x="84" y="246" fill="#c6369c"/>
<rect x="87" y="246" fill="#d0359a"/>
<rect x="90" y="246" fill="#da3699"/>
<rect x="93" y="246" fill="#e13698"/>
<rect x="96" y="246" fill="#e23797"/>
<rect x="99" y="246" fill="#e33796"/>
<rect x="102" y="246" fill="#e43794"/>
<rect x="105" y="246" fill="#e53693"/>
<rect x="108" y="246" fill="#e63592"/>
<rect x="111" y="246" fill="#e63490"/>
<rect x="114" y="246" fill="#e7318e"/>
<rect x="117" y="246" fill="#e72f8b"/>
<rect x="120" y="246" fill="#e72d87"/>
<rect x="123" y="246" fill="#e72c83"/>
<rect x="126" y="246" fill="#e72b80"/>
<rect x="129" y="246" fill="#e72b7d"/>
<rect x="132" y="246" fill="#e72a7a"/>
<rect x="135" y="246" fill="#e82a77"/>
<rect x="138" y="246" fill="#e82a74"/>
<rect x="30" y="249" fill="#008dd5"/>
<rect x="33" y="249" fill="#008ad4"/>
<rect x="36" y="249" fill="#0087d2"/>
<rect x="39" y="249" fill="#0083d0"/>
<rect x="42" y="249" fill="#007ecd"/>
<rect x="45" y="249" fill="#0079ca"/>
<rect x="48" y="249" fill="#0072c6"/>
<rect x="51" y="249" fill="#016ac2"/>
<rect x="54" y="249" fill="#0361bc"/>
<rect x="57" y="249" fill="#0655b5"/>
<rect x="60" y="249" fill="#0d47a9"/>
<rect x="63" y="249" fill="#17399f"/>
<rect x="66" y="249" fill="#292e96"/>
<rect x="69" y="249" fill="#532a8f"/>
<rect x="72" y="249" fill="#6e2e95"/>
<rect x="75" y="249" fill="#893299"/>
<rect x="78" y="249" fill="#a5359c"/>
<rect x="81" y="249" fill="#bb379d"/>
<rect x="84" y="249" fill="#c5359b"/>
<rect x="87" y="249" fill="#cf3499"/>
<rect x="90" y="249" fill="#d83398"/>
<rect x="93" y="249" fill="#e03396"/>
<rect x="96" y="249" fill="#e13295"/>
<rect x="99" y="249" fill="#e23294"/>
<rect x="102" y="249" fill="#e33292"/>
<rect x="105" y="249" fill="#e43191"/>
<rect x="108" y="249" fill="#e53190"/>
<rect x="111" y="249" fill="#e6308e"/>
<rect x="114" y="249" fill="#e62e8d"/>
<rect x="117" y="249" fill="#e72d8b"/>
<rect x="120" y="249" fill="#e72c89"/>
<rect x="123" y="249" fill="#e72c85"/>
<rect x="126" y="249" fill="#e72b82"/>
<rect x="129" y="249" fill="#e72b7f"/>
<rect x="132" y="249" fill="#e72b7d"/>
<rect x="33" y="252" fill="#0087d2"/>
<rect x="36" y="252" fill="#0083d0"/>
<rect x="39" y="252" fill="#007fcd"/>
<rect x="42" y="252" fill="#007acb"/>
<rect x="45" y="252" fill="#0074c7"/>
<rect x="48" y="252" fill="#006cc3"/>
<rect x="51" y="252" fill="#0265be"/>
<rect x="54" y="252" fill="#045bb8"/>
<rect x="57" y="252" fill="#094eb0"/>
<rect x="60" y="252" fill="#113fa3"/>
<rect x="63" y="252" fill="#1d339b"/>
<rect x="66" y="252" fill="#392b92"/>
<rect x="69" y="252" fill="#5a2b90"/>
<rect x="72" y="252" fill="#732f96"/>
<rect x="75" y="252" fill="#8e329a"/>
<rect x="78" y="252" fill="#a8359c"/>
<rect x="81" y="252" fill="#bc379d"/>
<rect x="84" y="252" fill="#c5359b"/>
<rect x="87" y="252" fill="#ce349a"/>
<rect x="90" y="252" fill="#d73398"/>
<rect x="93" y="252" fill="#df3296"/>
<rect x="96" y="252" fill="#e13195"/>
<rect x="99" y="252" fill="#e23193"/>
<rect x="102" y="252" fill="#e33092"/>
<rect x="105" y="252" fill="#e32f90"/>
<rect x="108" y="252" fill="#e42f8f"/>
<rect x="111" y="252" fill="#e52e8e"/>
<rect x="114" y="252" fill="#e62d8d"/>
<rect x="117" y="252" fill="#e62d8b"/>
<rect x="120" y="252" fill="#e72c8a"/>
<rect x="123" y="252" fill="#e72c88"/>
<rect x="126" y="252" fill="#e72b85"/>
<rect x="129" y="252" fill="#e72b82"/>
<rect x="33" y="255" fill="#0083d0"/>
<rect x="36" y="255" fill="#007fce"/>
<rect x="39" y="255" fill="#007bcb"/>
<rect x="42" y="255" fill="#0075c8"/>
<rect x="45" y="255" fill="#006fc4"/>
<rect x="48" y="255" fill="#0168c0"/>
<rect x="51" y="255" fill="#035fbb"/>
<rect x="54" y="255" fill="#0654b4"/>
<rect x="57" y="255" fill="#0c48aa"/>
<rect x="60" y="255" fill="#153ba0"/>
<rect x="63" y="255" fill="#233198"/>
<rect x="66" y="255" fill="#47288d"/>
<rect x="69" y="255" fill="#612c92"/>
<rect x="72" y="255" fill="#783098"/>
<rect x="75" y="255" fill="#92339a"/>
<rect x="78" y="255" fill="#aa359d"/>
<rect x="81" y="255" fill="#bc379d"/>
<rect x="84" y="255" fill="#c5359b"/>
<rect x="87" y="255" fill="#ce349a"/>
<rect x="90" y="255" fill="#d63398"/>
<rect x="93" y="255" fill="#dd3297"/>
<rect x="96" y="255" fill="#e13295"/>
<rect x="99" y="255" fill="#e13194"/>
<rect x="102" y="255" fill="#e23092"/>
<rect x="105" y="255" fill="#e32f91"/>
<rect x="108" y="255" fill="#e42f90"/>
<rect x="111" y="255" fill="#e42e8e"/>
<rect x="114" y="255" fill="#e52e8d"/>
<rect x="117" y="255" fill="#e62d8c"/>
<rect x="120" y="255" fill="#e62d8b"/>
<rect x="123" y="255" fill="#e72c8a"/>
<rect x="33" y="258" fill="#0080ce"/>
<rect x="36" y="258" fill="#007ccc"/>
<rect x="39" y="258" fill="#0077c9"/>
<rect x="42" y="258" fill="#0071c6"/>
<rect x="45" y="258" fill="#016ac2"/>
<rect x="48" y="258" fill="#0363bd"/>
<rect x="51" y="258" fill="#0559b7"/>
<rect x="54" y="258" fill="#094eaf"/>
<rect x="57" y="258" fill="#1040a4"/>
<rect x="60" y="258" fill="#1a369c"/>
<rect x="63" y="258" fill="#2b2d95"/>
<rect x="66" y="258" fill="#50298e"/>
<rect x="69" y="258" fill="#672d93"/>
<rect x="72" y="258" fill="#7d3098"/>
<rect x="75" y="258" fill="#96339b"/>
<rect x="78" y="258" fill="#ad369d"/>
<rect x="81" y="258" fill="#bc369d"/>
<rect x="84" y="258" fill="#c5359b"/>
<rect x="87" y="258" fill="#cd349a"/>
<rect x="90" y="258" fill="#d53398"/>
<rect x="93" y="258" fill="#dc3397"/>
<rect x="96" y="258" fill="#e03295"/>
<rect x="99" y="258" fill="#e13194"/>
<rect x="102" y="258" fill="#e23093"/>
<rect x="105" y="258" fill="#e33091"/>
<rect x="108" y="258" fill="#e32f90"/>
<rect x="111" y="258" fill="#e42e8f"/>
<rect x="114" y="258" fill="#e52e8e"/>
<rect x="117" y="258" fill="#e52d8d"/>
<rect x="33" y="261" fill="#007ccc"/>
<rect x="36" y="261" fill="#0078ca"/>
<rect x="39" y="261" fill="#0072c6"/>
<rect x="42" y="261" fill="#006cc3"/>
<rect x="45" y="261" fill="#0266bf"/>
<rect x="48" y="261" fill="#045eba"/>
<rect x="51" y="261" fill="#0653b3"/>
<rect x="54" y="261" fill="#0c48aa"/>
<rect x="57" y="261" fill="#143ca1"/>
<rect x="60" y="261" fill="#1f329a"/>
<rect x="63" y="261" fill="#392b92"/>
<rect x="66" y="261" fill="#572a90"/>
<rect x="69" y="261" fill="#6c2e95"/>
<rect x="72" y="261" fill="#823199"/>
<rect x="75" y="261" fill="#99339b"/>
<rect x="78" y="261" fill="#af369d"/>
<rect x="81" y="261" fill="#bd369d"/>
<rect x="84" y="261" fill="#c5359b"/>
<rect x="87" y="261" fill="#cd349a"/>
<rect x="90" y="261" fill="#d43498"/>
<rect x="93" y="261" fill="#db3397"/>
<rect x="96" y="261" fill="#e03296"/>
<rect x="99" y="261" fill="#e13194"/>
<rect x="102" y="261" fill="#e23093"/>
<rect x="105" y="261" fill="#e23092"/>
<rect x="108" y="261" fill="#e32f91"/>
<rect x="111" y="261" fill="#e42f8f"/>
<rect x="114" y="261" fill="#e42e8e"/>
<rect x="36" y="264" fill="#0074c7"/>
<rect x="39" y="264" fill="#006ec4"/>
<rect x="42" y="264" fill="#0168c0"/>
<rect x="45" y="264" fill="#0361bc"/>
<rect x="48" y="264" fill="#0558b7"/>
<rect x="51" y="264" fill="#094eaf"/>
<rect x="54" y="264" fill="#0f41a5"/>
<rect x="57" y="264" fill="#18389e"/>
<rect x="60" y="264" fill="#253097"/>
<rect x="63" y="264" fill="#43298f"/>
<rect x="66" y="264" fill="#5d2b91"/>
<rect x="69" y="264" fill="#712f96"/>
<rect x="72" y="264" fill="#863199"/>
<rect x="75" y="264" fill="#9c349b"/>
<rect x="78" y="264" fill="#b0369d"/>
<rect x="81" y="264" fill="#bd369d"/>
<rect x="84" y="264" fill="#c5359b"/>
<rect x="87" y="264" fill="#cc349a"/>
<rect x="90" y="264" fill="#d33499"/>
<rect x="93" y="264" fill="#da3397"/>
<rect x="96" y="264" fill="#e03296"/>
<rect x="99" y="264" fill="#e13195"/>
<rect x="102" y="264" fill="#e23193"/>
<rect x="105" y="264" fill="#e23092"/>
<rect x="108" y="264" fill="#e32f91"/>
<rect x="36" y="267" fill="#0070c5"/>
<rect x="39" y="267" fill="#016ac2"/>
<rect x="42" y="267" fill="#0264be"/>
<rect x="45" y="267" fill="#045cb9"/>
<rect x="48" y="267" fill="#0753b3"/>
<rect x="51" y="267" fill="#0c48ab"/>
<rect x="54" y="267" fill="#133da2"/>
<rect x="57" y="267" fill="#1d349b"/>
<rect x="60" y="267" fill="#2d2d95"/>
<rect x="63" y="267" fill="#4e298d"/>
<rect x="66" y="267" fill="#622c92"/>
<rect x="69" y="267" fill="#752f97"/>
<rect x="72" y="267" fill="#8a329a"/>
<rect x="75" y="267" fill="#9e349c"/>
<rect x="78" y="267" fill="#b2369d"/>
<rect x="81" y="267" fill="#bd369d"/>
<rect x="84" y="267" fill="#c5359b"/>
<rect x="87" y="267" fill="#cc359a"/>
<rect x="90" y="267" fill="#d33499"/>
<rect x="93" y="267" fill="#d93397"/>
<rect x="96" y="267" fill="#df3296"/>
<rect x="99" y="267" fill="#e13195"/>
<rect x="102" y="267" fill="#e13194"/>
<rect x="105" y="267" fill="#e23093"/>
<rect x="36" y="270" fill="#006cc3"/>
<rect x="39" y="270" fill="#0267bf"/>
<rect x="42" y="270" fill="#0360bb"/>
<rect x="45" y="270" fill="#0557b6"/>
<rect x="48" y="270" fill="#094eaf"/>
<rect x="51" y="270" fill="#0f42a6"/>
<rect x="54" y="270" fill="#163a9f"/>
<rect x="57" y="270" fill="#213299"/>
<rect x="60" y="270" fill="#3a2b92"/>
<rect x="63" y="270" fill="#542a8f"/>
<rect x="66" y="270" fill="#672d93"/>
<rect x="69" y="270" fill="#793098"/>
<rect x="72" y="270" fill="#8d329a"/>
<rect x="75" y="270" fill="#a1349c"/>
<rect x="78" y="270" fill="#b3369e"/>
<rect x="81" y="270" fill="#be369d"/>
<rect x="84" y="270" fill="#c5359b"/>
<rect x="87" y="270" fill="#cc359a"/>
<rect x="90" y="270" fill="#d23499"/>
<rect x="93" y="270" fill="#d83398"/>
<rect x="96" y="270" fill="#de3296"/>
<rect x="99" y="270" fill="#e03295"/>
<rect x="39" y="273" fill="#0363bd"/>
<rect x="42" y="273" fill="#045bb8"/>
<rect x="45" y="273" fill="#0752b3"/>
<rect x="48" y="273" fill="#0c49ab"/>
<rect x="51" y="273" fill="#123ea3"/>
<rect x="54" y="273" fill="#1a369c"/>
<rect x="57" y="273" fill="#262f97"/>
<rect x="60" y="273" fill="#412990"/>
<rect x="63" y="273" fill="#592b90"/>
<rect x="66" y="273" fill="#6b2e94"/>
<rect x="69" y="273" fill="#7d3098"/>
<rect x="72" y="273" fill="#90339a"/>
<rect x="75" y="273" fill="#a3359c"/>
<rect x="78" y="273" fill="#b5379e"/>
<rect x="81" y="273" fill="#be369d"/>
<rect x="84" y="273" fill="#c5359b"/>
<rect x="87" y="273" fill="#cb359a"/>
<rect x="90" y="273" fill="#d13499"/>
<rect x="93" y="273" fill="#d73398"/>
<rect x="39" y="276" fill="#045eba"/>
<rect x="42" y="276" fill="#0556b5"/>
<rect x="45" y="276" fill="#094eaf"/>
<rect x="48" y="276" fill="#0e43a7"/>
<rect x="51" y="276" fill="#153ba0"/>
<rect x="54" y="276" fill="#1e339a"/>
<rect x="57" y="276" fill="#2e2d95"/>
<rect x="60" y="276" fill="#4c298d"/>
<rect x="63" y="276" fill="#5e2c91"/>
<rect x="66" y="276" fill="#6f2e95"/>
<rect x="69" y="276" fill="#803199"/>
<rect x="72" y="276" fill="#93339a"/>
<rect x="75" y="276" fill="#a5359c"/>
<rect x="78" y="276" fill="#b6379e"/>
<rect x="81" y="276" fill="#be369d"/>
<rect x="84" y="276" fill="#c5359b"/>
<rect x="87" y="276" fill="#cb359a"/>
<rect x="90" y="276" fill="#d13499"/>
<rect x="39" y="279" fill="#055ab8"/>
<rect x="42" y="279" fill="#0752b2"/>
<rect x="45" y="279" fill="#0b49ab"/>
<rect x="48" y="279" fill="#113fa3"/>
<rect x="51" y="279" fill="#19379e"/>
<rect x="54" y="279" fill="#233198"/>
<rect x="57" y="279" fill="#3a2b92"/>
<rect x="60" y="279" fill="#522a8e"/>
<rect x="63" y="279" fill="#632c92"/>
<rect x="66" y="279" fill="#732f96"/>
<rect x="69" y="279" fill="#843199"/>
<rect x="72" y="279" fill="#96339b"/>
<rect x="75" y="279" fill="#a7359c"/>
<rect x="78" y="279" fill="#b7379e"/>
<rect x="81" y="279" fill="#be369d"/>
<rect x="84" y="279" fill="#c5359b"/>
<rect x="42" y="282" fill="#094eaf"/>
<rect x="45" y="282" fill="#0e44a7"/>
<rect x="48" y="282" fill="#143ca1"/>
<rect x="51" y="282" fill="#1c349b"/>
<rect x="54" y="282" fill="#282e96"/>
<rect x="57" y="282" fill="#402990"/>
<rect x="60" y="282" fill="#572a8f"/>
<rect x="63" y="282" fill="#672d93"/>
<rect x="66" y="282" fill="#762f97"/>
<rect x="69" y="282" fill="#873199"/>
<rect x="72" y="282" fill="#98339b"/>
<rect x="75" y="282" fill="#a9359d"/>
<rect x="78" y="282" fill="#b8379e"/>
<rect x="42" y="285" fill="#0b49ac"/>
<rect x="45" y="285" fill="#113fa4"/>
<rect x="48" y="285" fill="#17399f"/>
<rect x="51" y="285" fill="#203299"/>
<rect x="54" y="285" fill="#2f2d94"/>
<rect x="57" y="285" fill="#4b288d"/>
<rect x="60" y="285" fill="#5b2b91"/>
<rect x="63" y="285" fill="#6a2e94"/>
<rect x="66" y="285" fill="#793098"/>
<rect x="69" y="285" fill="#8a329a"/>
<rect x="72" y="285" fill="#9b349b"/>
<rect x="75" y="285" fill="#aa359d"/>
<rect x="45" y="288" fill="#133da2"/>
<rect x="48" y="288" fill="#1b359c"/>
<rect x="51" y="288" fill="#243098"/>
<rect x="54" y="288" fill="#3a2b92"/>
<rect x="57" y="288" fill="#50298e"/>
<rect x="60" y="288" fill="#5f2c92"/>
<rect x="63" y="288" fill="#6e2e95"/>
<rect x="66" y="288" fill="#7c3098"/>
<rect x="69" y="288" fill="#8d329a"/>
<rect x="45" y="291" fill="#163a9f"/>
<rect x="48" y="291" fill="#1e339a"/>
<rect x="51" y="291" fill="#292e96"/>
<rect x="54" y="291" fill="#402a90"/>
<rect x="57" y="291" fill="#542a8f"/>
<rect x="60" y="291" fill="#632c93"/>
<rect x="63" y="291" fill="#712f96"/>
<rect x="66" y="291" fill="#803199"/>
<rect x="48" y="294" fill="#213199"/>
<rect x="51" y="294" fill="#302d94"/>
<rect x="54" y="294" fill="#4a288c"/>
<rect x="57" y="294" fill="#592b90"/>
<rect x="60" y="294" fill="#672d93"/>
<rect x="51" y="297" fill="#3a2b92"/>
<rect x="54" y="297" fill="#4e298e"/>
</g></g>
<path d="M15.2 29.9V299.5M15.2 299.5H217.5M37.7 29.9V299.5M15.2 269.6H217.5M60.2 29.9V299.5M15.2 239.6H217.5M82.6 29.9V299.5M15.2 209.6H217.5M105.1 29.9V299.5M15.2 179.7H217.5M127.6 29.9V299.5M15.2 149.8H217.5M150.1 29.9V299.5M15.2 119.8H217.5M172.6 29.9V299.5M15.2 89.8H217.5M195.0 29.9V299.5M15.2 59.9H217.5M217.5 29.9V299.5M15.2 29.9H217.5" stroke="#fff" stroke-opacity=".5" stroke-width=".7" fill="none"/>
<text class="ax" x="15.2" y="308.8" text-anchor="middle" textLength="7.6" lengthAdjust="spacingAndGlyphs">0.0</text>
<text class="ax" x="12.2" y="301.9" text-anchor="end" textLength="7.6" lengthAdjust="spacingAndGlyphs">0.0</text>
<text class="ax" x="37.7" y="308.8" text-anchor="middle" textLength="7.6" lengthAdjust="spacingAndGlyphs">0.1</text>
<text class="ax" x="12.2" y="271.9" text-anchor="end" textLength="7.6" lengthAdjust="spacingAndGlyphs">0.1</text>
<text class="ax" x="60.2" y="308.8" text-anchor="middle" textLength="7.6" lengthAdjust="spacingAndGlyphs">0.2</text>
<text class="ax" x="12.2" y="242.0" text-anchor="end" textLength="7.6" lengthAdjust="spacingAndGlyphs">0.2</text>
<text class="ax" x="82.6" y="308.8" text-anchor="middle" textLength="7.6" lengthAdjust="spacingAndGlyphs">0.3</text>
<text class="ax" x="12.2" y="212.0" text-anchor="end" textLength="7.6" lengthAdjust="spacingAndGlyphs">0.3</text>
<text class="ax" x="105.1" y="308.8" text-anchor="middle" textLength="7.6" lengthAdjust="spacingAndGlyphs">0.4</text>
<text class="ax" x="12.2" y="182.1" text-anchor="end" textLength="7.6" lengthAdjust="spacingAndGlyphs">0.4</text>
<text class="ax" x="127.6" y="308.8" text-anchor="middle" textLength="7.6" lengthAdjust="spacingAndGlyphs">0.5</text>
<text class="ax" x="12.2" y="152.2" text-anchor="end" textLength="7.6" lengthAdjust="spacingAndGlyphs">0.5</text>
<text class="ax" x="150.1" y="308.8" text-anchor="middle" textLength="7.6" lengthAdjust="spacingAndGlyphs">0.6</text>
<text class="ax" x="12.2" y="122.2" text-anchor="end" textLength="7.6" lengthAdjust="spacingAndGlyphs">0.6</text>
<text class="ax" x="172.6" y="308.8" text-anchor="middle" textLength="7.6" lengthAdjust="spacingAndGlyphs">0.7</text>
<text class="ax" x="12.2" y="92.2" text-anchor="end" textLength="7.6" lengthAdjust="spacingAndGlyphs">0.7</text>
<text class="ax" x="195.0" y="308.8" text-anchor="middle" textLength="7.6" lengthAdjust="spacingAndGlyphs">0.8</text>
<text class="ax" x="12.2" y="62.3" text-anchor="end" textLength="7.6" lengthAdjust="spacingAndGlyphs">0.8</text>
<text class="ax" x="217.5" y="308.8" text-anchor="middle" textLength="7.6" lengthAdjust="spacingAndGlyphs">0.9</text>
<text class="ax" x="12.2" y="32.3" text-anchor="end" textLength="7.6" lengthAdjust="spacingAndGlyphs">0.9</text>
<text class="ax" x="8.5" y="21" text-anchor="middle" style="font-size:6px">y</text><text class="ax" x="227.89999999999998" y="301" text-anchor="middle" style="font-size:6px">x</text>
<text class="wl" x="30.6" y="43.7" text-anchor="middle" textLength="9.6" lengthAdjust="spacingAndGlyphs">520</text>
<text class="wl" x="72.4" y="67.7" text-anchor="middle" textLength="9.6" lengthAdjust="spacingAndGlyphs">540</text>
<text class="wl" x="99.5" y="107.1" text-anchor="middle" textLength="9.6" lengthAdjust="spacingAndGlyphs">560</text>
<text class="wl" x="136.3" y="148.7" text-anchor="middle" textLength="9.6" lengthAdjust="spacingAndGlyphs">580</text>
<text class="wl" x="165.9" y="185.8" text-anchor="middle" textLength="9.6" lengthAdjust="spacingAndGlyphs">600</text>
<text class="wl" x="179.0" y="203.6" text-anchor="middle" textLength="9.6" lengthAdjust="spacingAndGlyphs">620</text>
<text class="wl" x="189.2" y="216.2" text-anchor="middle" textLength="9.6" lengthAdjust="spacingAndGlyphs">700</text>
<text class="wl" x="9.2" y="140.2" text-anchor="middle" textLength="9.6" lengthAdjust="spacingAndGlyphs">500</text>
<text class="wl" x="20.7" y="217.6" text-anchor="middle" textLength="9.6" lengthAdjust="spacingAndGlyphs">490</text>
<text class="wl" x="25.7" y="263.7" text-anchor="middle" textLength="9.6" lengthAdjust="spacingAndGlyphs">480</text>
<text class="wl" x="32.2" y="286.7" text-anchor="middle" textLength="9.6" lengthAdjust="spacingAndGlyphs">470</text>
<text class="wl" x="42.5" y="298.2" text-anchor="middle" textLength="9.6" lengthAdjust="spacingAndGlyphs">460</text>
<text class="wl" x="49.3" y="305.8" text-anchor="middle" textLength="9.6" lengthAdjust="spacingAndGlyphs">380</text>
<path d="M30.6 46.3L31.0 49.0M68.2 69.8L66.6 72.2M100.1 109.2L98.6 111.4M131.9 150.8L130.4 153.0M158.0 184.8L156.5 187.0M172.3 204.6L171.3 206.8M183.7 218.2L181.6 220.4M14.0 137.7L17.0 137.7M23.0 210.4L25.5 210.0M32.5 259.8L35.5 259.0M40.0 282.2L42.6 280.8M45.4 291.8L47.2 289.8M53.0 300.5L54.4 298.2" stroke="#0b5ba8" stroke-width=".8" fill="none"/>
<g stroke="#000" stroke-width="1" fill="none"><circle cx="90.5" cy="195.5" r="3.2" fill="#fff"/><path d="M87.5 195.5h6M90.5 192.5v6"/></g>
</svg>
<div class="t " id="t24" style="left:598.70px;top:517px;letter-spacing:-0.197px;color:#6c6c6c">Luminance: 80.000 cd/m²</div>
<div class="t " id="t25" style="left:585.10px;top:537px;letter-spacing:0.025px;color:#6c6c6c">White Point: x: 0.332&nbsp; y: 0.347</div>
</body></html>
